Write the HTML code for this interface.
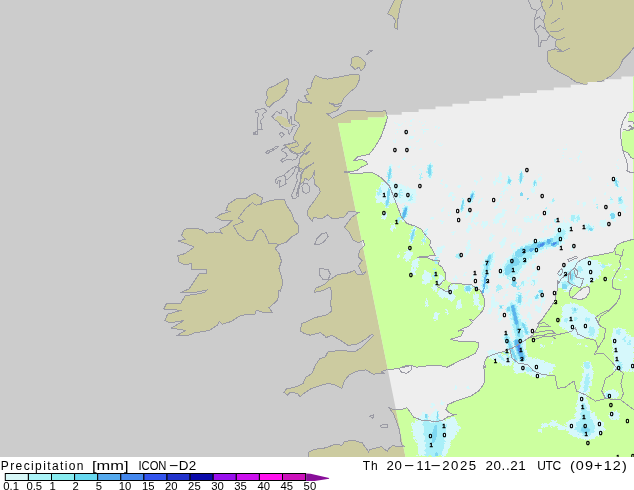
<!DOCTYPE html>
<html><head><meta charset="utf-8"><title>Precipitation ICON-D2</title>
<style>
html,body{margin:0;padding:0;background:#fff;}
body{width:634px;height:490px;position:relative;overflow:hidden;font-family:"Liberation Sans",sans-serif;color:#000;}
.tx{font-family:"Liberation Sans",sans-serif;fill:#000;}
.n{font-family:"Liberation Sans",sans-serif;font-size:6px;font-weight:normal;fill:#000;stroke:#000;stroke-width:0.5px;}
</style></head><body>
<svg width="634" height="457" viewBox="0 0 634 457" style="position:absolute;left:0;top:0;display:block;will-change:transform" shape-rendering="crispEdges">
<defs><clipPath id="dom"><polygon points="338.0,122.9 351.0,122.9 351.0,120.1 367.9,120.1 367.9,117.4 384.79999999999995,117.4 384.8,114.7 401.7,114.7 401.7,112.0 418.59999999999997,112.0 418.59999999999997,109.3 435.49999999999994,109.3 435.5,106.5 452.4,106.5 452.4,103.8 469.29999999999995,103.8 469.29999999999995,101.1 486.19999999999993,101.1 486.2,98.4 503.09999999999997,98.4 503.09999999999997,95.7 520.0,95.7 520.0,92.9 536.9,92.9 536.9,90.2 553.8,90.2 553.8,87.5 570.6999999999999,87.5 570.7,84.8 587.6,84.8 587.5999999999999,82.1 604.4999999999999,82.1 604.5,79.3 621.4,79.3 621.4,76.6 636,76.6 636,458 405.7,458"/></clipPath>
<filter id="rg" x="0" y="0" width="634" height="457" filterUnits="userSpaceOnUse" color-interpolation-filters="sRGB"><feTurbulence type="fractalNoise" baseFrequency="0.45" numOctaves="2" seed="3" result="t"/><feDisplacementMap in="SourceGraphic" in2="t" scale="5" xChannelSelector="R" yChannelSelector="G"/></filter>
<filter id="rg2" x="0" y="0" width="634" height="457" filterUnits="userSpaceOnUse" color-interpolation-filters="sRGB"><feTurbulence type="fractalNoise" baseFrequency="0.45" numOctaves="1" seed="8" result="t"/><feDisplacementMap in="SourceGraphic" in2="t" scale="2" xChannelSelector="R" yChannelSelector="G"/></filter>
</defs>
<rect x="0" y="0" width="634" height="457" fill="#cccccc"/>
<polygon points="315.2,75.3 321.0,77.8 327.3,79.1 341.3,76.6 351.4,74.6 359.0,74.6 359.5,79.1 357.7,84.2 355.2,88.0 350.1,91.8 343.8,98.1 341.3,103.7 334.9,104.4 328.6,102.7 336.2,107.0 341.3,105.2 337.5,110.3 329.9,113.3 327.3,113.8 332.4,118.4 340.0,114.6 348.9,110.0 361.5,110.8 376.7,111.5 385.6,110.8 387.6,117.6 384.3,127.7 380.5,137.8 374.2,148.0 369.1,154.3 357.7,156.8 353.9,160.6 361.5,159.4 366.6,161.9 367.8,164.4 361.5,167.0 356.5,170.8 343.8,172.0 351.4,173.3 360.3,173.3 371.6,172.0 380.5,177.1 389.4,185.9 393.7,196.9 397.5,206.4 401.3,216.8 407.0,223.5 415.5,226.3 421.2,229.2 426.0,235.8 430.7,240.5 429.8,245.3 433.6,251.9 435.5,255.7 426.9,256.1 420.3,256.7 417.4,258.0 426.9,257.6 433.6,260.5 439.3,260.5 438.3,264.3 441.8,266.9 445.1,272.6 445.5,279.7 442.7,281.1 440.3,284.4 437.5,286.3 438.0,287.2 441.8,288.7 444.6,291.0 448.4,291.3 448.4,287.7 450.3,284.4 453.1,283.4 457.8,283.4 464.5,284.4 471.1,284.4 474.4,286.8 476.8,289.1 480.0,289.6 483.9,297.1 484.8,304.7 482.9,310.4 478.2,316.1 473.4,320.8 469.6,318.9 472.5,322.7 468.7,326.5 463.0,328.4 458.2,331.2 463.9,330.3 461.1,336.0 455.4,337.9 450.6,339.2 455.4,340.7 464.9,341.7 473.4,341.1 478.2,342.6 478.2,347.4 475.3,353.1 468.7,356.9 462.0,359.7 454.4,363.5 446.9,367.3 440.2,365.4 430.7,365.4 423.1,366.3 416.5,367.3 410.8,365.4 404.2,367.3 398.5,368.2 392.8,369.2 385.2,370.1 381.4,372.0 384.9,373.2 377.3,373.2 373.5,374.5 365.9,369.9 358.4,370.7 349.5,374.5 344.4,380.8 341.9,388.4 334.3,384.6 328.0,383.4 319.1,385.9 311.5,388.4 303.9,393.5 300.1,396.8 297.6,393.5 290.0,392.2 287.8,395.1 284.1,392.5 286.6,388.7 294.2,387.5 303.0,383.7 305.6,377.3 311.9,373.5 315.7,364.7 320.0,358.4 319.1,359.3 325.4,356.8 328.0,351.7 340.6,350.5 354.6,351.7 360.9,347.9 367.2,342.1 373.5,335.3 371.5,334.5 365.9,339.1 357.1,344.1 348.2,345.4 340.6,340.3 331.8,335.3 325.4,337.8 325.4,336.5 320.4,332.7 310.3,335.2 305.2,333.9 300.6,331.4 301.4,323.8 307.7,321.3 315.3,317.5 326.7,314.9 331.8,311.1 330.5,303.5 331.8,294.7 330.5,287.1 321.6,290.9 314.6,292.2 315.3,288.4 324.2,284.6 328.0,280.8 338.1,274.4 347.0,273.2 354.6,270.6 357.1,274.4 363.4,274.4 365.9,271.9 362.2,273.2 358.4,265.6 362.2,260.5 358.4,256.7 359.6,250.4 364.7,245.3 363.4,240.3 358.4,242.8 353.3,240.3 349.5,232.7 344.4,227.6 345.1,226.3 351.4,217.5 359.0,212.4 348.9,211.1 343.8,217.5 332.4,218.7 327.3,214.9 322.3,218.7 313.4,217.5 312.2,221.3 307.1,214.9 308.4,208.6 315.9,198.5 320.2,191.9 319.0,188.1 314.5,184.3 313.9,178.0 314.5,170.4 312.6,176.7 308.8,180.5 305.0,178.0 303.8,181.8 300.0,184.3 298.7,190.6 296.2,195.7 298.1,188.1 300.0,181.8 301.2,172.9 305.0,169.1 310.1,165.3 313.9,162.8 306.3,167.2 300.0,171.6 298.7,165.3 300.0,157.7 303.8,153.9 310.1,151.4 305.7,154.6 303.8,152.7 307.6,146.3 310.7,142.5 306.3,146.3 302.5,152.0 298.7,153.9 294.9,152.7 289.8,149.5 287.3,147.6 284.8,145.1 291.1,143.8 296.2,141.3 293.0,139.2 293.6,136.7 295.5,132.9 297.4,129.1 300.0,125.3 298.1,122.8 294.9,120.3 294.3,115.2 296.2,111.4 296.8,103.8 298.7,100.0 300.8,101.9 312.2,103.2 307.1,100.6 304.6,95.6 308.4,94.3 306.3,89.2 310.9,88.0 312.2,81.6" fill="#cccba0" stroke="#9a9aa4" stroke-width="1" />
<polygon points="254.2,193.2 262.5,197.7 261.3,204.1 256.2,205.3 263.8,202.8 271.4,200.3 284.1,199.0 286.6,205.3 291.6,212.9 294.2,220.5 298.7,225.6 298.0,233.2 291.6,237.0 286.6,242.0 279.0,244.6 275.2,248.4 279.0,253.4 281.5,261.0 279.0,268.6 281.5,276.2 282.8,283.8 280.3,291.4 279.0,290.0 277.7,300.1 268.9,307.7 272.7,312.8 265.1,312.8 256.2,310.3 254.9,314.1 241.0,315.3 230.9,321.6 222.0,324.2 219.5,321.6 217.0,325.4 209.4,330.5 194.2,333.0 189.1,335.1 177.7,335.1 185.3,330.5 171.4,328.0 184.1,320.4 170.1,322.9 165.1,320.4 167.6,314.1 181.5,310.3 163.8,309.0 166.3,303.9 180.3,303.9 185.3,295.6 194.2,294.4 204.3,292.7 206.8,290.1 192.9,292.7 180.3,292.7 189.1,288.9 194.2,281.3 199.2,273.7 206.8,273.7 206.8,269.9 191.6,269.1 191.6,263.5 185.3,264.8 179.0,262.3 177.7,255.9 185.3,253.4 194.2,247.1 185.3,243.3 177.7,240.8 185.3,239.5 181.5,235.7 184.1,229.4 191.6,228.1 201.8,229.4 206.8,233.2 214.4,231.9 222.0,233.2 219.5,229.4 227.1,225.6 232.2,220.5 222.0,220.5 216.2,217.5 220.8,214.2 229.6,211.6 225.8,210.4 228.4,204.1 235.9,199.0 246.1,198.2" fill="#cccba0" stroke="#9a9aa4" stroke-width="1" />
<polygon points="308.2,456.3 309.0,451.7 315.3,449.2 325.4,447.9 335.6,444.1 341.9,445.4 344.4,441.6 353.3,440.3 362.2,442.9 368.5,451.7 370.0,449.4 373.8,448.5 381.4,446.6 387.1,451.3 389.0,448.5 392.8,445.6 398.5,446.6 405.1,447.0 401.3,444.7 400.4,437.1 399.4,429.5 396.6,421.9 393.7,414.3 389.0,407.7 393.7,409.6 401.3,409.6 407.0,407.7 409.8,411.5 413.6,417.2 421.2,420.0 430.7,421.0 437.4,421.5 443.1,420.0 446.9,417.2 453.5,415.3 457.3,414.0 453.5,414.7 448.7,412.4 445.9,409.6 447.8,404.8 453.5,402.0 461.1,399.2 470.6,396.3 479.1,390.6 483.9,384.0 484.8,374.5 483.5,365.0 485.5,368.2 484.6,361.6 487.4,356.9 495.0,354.0 504.5,351.2 512.1,348.3 519.7,343.6 527.3,338.8 533.0,335.0 538.7,325.5 537.7,323.6 542.5,318.9 546.3,313.2 551.0,306.6 554.8,300.9 557.3,289.5 557.6,280.0 558.6,283.2 561.4,278.5 567.1,274.7 570.9,270.9 574.7,268.1 576.6,263.3 581.4,259.5 589.0,256.7 597.5,255.3 607.0,253.4 613.6,251.9 614.6,249.1 617.4,244.7 622.2,242.4 628.8,240.5 635.4,238.6 636,239 636,458 308,458" fill="#cccba0" stroke="#9a9aa4" stroke-width="1" />
<polygon points="540.3,-1.1 542.5,8.5 545.6,12.7 543.5,21.2 545.6,29.7 551.0,36.1 556.3,39.3 555.2,45.6 561.6,51.0 555.2,48.8 547.8,51.0 547.1,60.5 551.0,66.9 559.4,72.2 567.9,76.4 575.4,81.7 584.9,84.5 593.4,82.8 601.9,81.1 610.4,76.4 618.9,67.9 623.1,59.4 629.5,53.1 635.9,44.6 635.9,-1.1" fill="#cccba0" stroke="#9a9aa4" stroke-width="1" />
<polygon points="286.8,78.5 288.9,80.5 288.1,85.2 285.7,89.2 287.3,90.8 283.4,96.3 278.6,100.2 273.9,102.6 269.2,107.3 266.8,105.7 265.2,102.6 267.6,97.9 266.0,92.3 268.4,88.4 273.9,86.0 281.0,82.1" fill="#cccba0" stroke="#9a9aa4" stroke-width="1" />
<polygon points="351.4,58.1 356.5,56.1 361.5,58.1 365.8,63.2 364.1,68.2 361.0,70.8 359.0,67.0 355.2,69.5 350.9,65.7" fill="#cccba0" stroke="#9a9aa4" stroke-width="1" />
<polygon points="387.6,13.9 391.4,6.3 395.2,-1.3 402.8,-1.3 400.3,6.3 399.0,12.7 397.7,20.3 397.2,29.1 394.7,27.8 395.2,20.3 392.7,16.5" fill="#cccba0" stroke="#9a9aa4" stroke-width="1" />
<polygon points="274.7,119.0 277.2,115.8 282.3,116.5 287.3,119.0 288.6,123.4 291.7,124.1 291.1,117.7 292.4,117.7 292.4,125.3 289.2,127.2 286.1,127.2 282.3,125.3 278.5,122.2" fill="#cccba0" stroke="none" stroke-width="1" />
<polygon points="272.1,116.5 276.6,111.4 281.0,113.9 281.6,110.1 284.8,109.5 287.3,112.7 287.9,119.0 289.2,122.8 290.5,116.5 291.7,117.1 291.7,124.1 296.2,125.3 293.0,127.2 291.1,131.6 289.2,134.2 287.9,129.7 283.5,127.8 281.0,125.9 278.5,122.2 274.7,119.6" fill="none" stroke="#9a9aa4" stroke-width="1" />
<polygon points="255.8,110.5 263.7,108.1 266.8,111.3 262.1,114.4 263.7,117.6 260.5,120.7 262.1,129.4 257.4,129.4 257.4,119.9 258.9,113.6 255.8,112.1" fill="none" stroke="#9a9aa4" stroke-width="1" />
<polygon points="253.4,134.1 257.4,131.0 257.4,134.9" fill="none" stroke="#9a9aa4" stroke-width="1" />
<polygon points="283.5,145.1 289.2,143.8 293.6,142.5 296.8,141.9 298.7,145.7 294.9,147.0 291.1,147.6 289.2,150.1 292.4,152.7 296.2,153.9 298.1,155.8 296.2,159.0 292.4,160.3 289.2,159.0 285.4,160.3 282.3,162.2 280.7,160.9 282.3,159.0 285.4,157.7 287.3,155.2 285.4,152.7 282.3,151.4 281.6,149.5 284.2,148.2 286.1,147.0" fill="none" stroke="#9a9aa4" stroke-width="1" />
<polygon points="284.8,174.2 289.2,170.4 293.6,167.2 295.9,166.6 294.3,171.6 291.1,176.1 287.9,179.2 285.4,179.9" fill="none" stroke="#9a9aa4" stroke-width="1" />
<polygon points="275.3,180.5 277.8,177.3 281.6,176.1 284.8,174.8 285.4,179.9 286.1,183.7 282.9,185.6 279.7,187.1 279.1,183.7 280.4,180.5 277.8,181.1 277.2,183.7 275.7,183.0" fill="none" stroke="#9a9aa4" stroke-width="1" />
<polygon points="295.9,167.2 298.1,165.3 299.3,167.2 298.1,171.6 296.2,176.7 297.4,180.5 295.5,185.6 293.6,190.6 291.7,195.1 292.4,198.2 295.5,198.5 298.1,196.3 298.7,190.6 300.0,184.3 301.2,178.0 302.5,172.3 304.4,169.7" fill="none" stroke="#9a9aa4" stroke-width="1" />
<polygon points="301.9,186.2 303.8,183.7 306.9,183.3 309.1,186.2 309.8,190.6 308.2,192.9 305.0,193.2 302.8,191.3" fill="none" stroke="#9a9aa4" stroke-width="1" />
<polygon points="265.8,152.7 267.7,150.8 270.2,150.1 272.8,148.9 275.3,147.0 278.5,146.1 277.8,147.6 274.7,149.1 272.1,151.1 269.6,152.0 267.1,154.2" fill="none" stroke="#9a9aa4" stroke-width="1" />
<polygon points="279.1,134.2 281.6,132.3 284.2,134.8 282.0,137.3" fill="none" stroke="#9a9aa4" stroke-width="1" />
<polygon points="253.9,132.7 257.7,130.6 257.2,134.7" fill="none" stroke="#9a9aa4" stroke-width="1" />
<polygon points="314.6,244.8 316.6,239.0 321.6,233.9 326.7,232.7 328.0,236.5 324.2,241.5 319.1,244.8" fill="none" stroke="#9a9aa4" stroke-width="1" />
<polygon points="319.1,268.6 328.0,269.4 330.5,274.4 328.0,279.5 322.9,279.5 319.1,274.4" fill="none" stroke="#9a9aa4" stroke-width="1" />
<polygon points="369.7,416.3 373.5,415.0 373.0,418.3" fill="none" stroke="#9a9aa4" stroke-width="1" />
<polygon points="380.6,425.1 387.5,424.6 387.0,427.7 381.1,427.2" fill="none" stroke="#9a9aa4" stroke-width="1" />
<polygon points="366.6,55.1 369.1,51.0 372.9,50.5 370.4,51.8" fill="none" stroke="#9a9aa4" stroke-width="1" />
<polyline points="256.2,205.3 252.4,202.8 246.1,207.8 238.5,218.0 243.5,221.8 233.4,225.6 238.5,234.4 247.3,240.8 252.4,240.8 257.5,230.6 261.3,229.4 265.1,234.4 268.9,243.3 275.2,243.3 279.0,244.6" fill="none" stroke="#9a9aa4" stroke-width="1"/>
<polyline points="527.6,-1.1 531.8,8.5 537.2,10.6 534.0,20.2 535.0,29.7 538.2,35.0 538.2,46.7 540.3,46.7 541.4,40.3 546.7,40.3 549.9,35.0" fill="none" stroke="#9a9aa4" stroke-width="1"/>
<polyline points="537.2,10.6 541.4,6.4 542.5,1.1" fill="none" stroke="#9a9aa4" stroke-width="1"/>
<polyline points="534.0,20.2 539.3,17.0 543.5,21.2" fill="none" stroke="#9a9aa4" stroke-width="1"/>
<polyline points="535.0,29.7 540.3,25.5 545.6,29.7" fill="none" stroke="#9a9aa4" stroke-width="1"/>
<polyline points="551.0,23.4 555.2,21.2 559.4,18.0" fill="none" stroke="#9a9aa4" stroke-width="1"/>
<polyline points="549.9,31.8 557.3,31.8 563.7,28.7" fill="none" stroke="#9a9aa4" stroke-width="1"/>
<polyline points="556.3,39.3 560.5,39.3 564.8,37.2" fill="none" stroke="#9a9aa4" stroke-width="1"/>
<polyline points="557.3,52.0 563.7,51.0 570.1,47.8" fill="none" stroke="#9a9aa4" stroke-width="1"/>
<polyline points="548.8,8.5 552.0,4.2 553.1,0.0" fill="none" stroke="#9a9aa4" stroke-width="1"/>
<polyline points="561.6,2.1 562.6,9.6" fill="none" stroke="#9a9aa4" stroke-width="1"/>
<g clip-path="url(#dom)">
<rect x="0" y="0" width="634" height="457" fill="#eeeeee"/>
<polygon points="315.2,75.3 321.0,77.8 327.3,79.1 341.3,76.6 351.4,74.6 359.0,74.6 359.5,79.1 357.7,84.2 355.2,88.0 350.1,91.8 343.8,98.1 341.3,103.7 334.9,104.4 328.6,102.7 336.2,107.0 341.3,105.2 337.5,110.3 329.9,113.3 327.3,113.8 332.4,118.4 340.0,114.6 348.9,110.0 361.5,110.8 376.7,111.5 385.6,110.8 387.6,117.6 384.3,127.7 380.5,137.8 374.2,148.0 369.1,154.3 357.7,156.8 353.9,160.6 361.5,159.4 366.6,161.9 367.8,164.4 361.5,167.0 356.5,170.8 343.8,172.0 351.4,173.3 360.3,173.3 371.6,172.0 380.5,177.1 389.4,185.9 393.7,196.9 397.5,206.4 401.3,216.8 407.0,223.5 415.5,226.3 421.2,229.2 426.0,235.8 430.7,240.5 429.8,245.3 433.6,251.9 435.5,255.7 426.9,256.1 420.3,256.7 417.4,258.0 426.9,257.6 433.6,260.5 439.3,260.5 438.3,264.3 441.8,266.9 445.1,272.6 445.5,279.7 442.7,281.1 440.3,284.4 437.5,286.3 438.0,287.2 441.8,288.7 444.6,291.0 448.4,291.3 448.4,287.7 450.3,284.4 453.1,283.4 457.8,283.4 464.5,284.4 471.1,284.4 474.4,286.8 476.8,289.1 480.0,289.6 483.9,297.1 484.8,304.7 482.9,310.4 478.2,316.1 473.4,320.8 469.6,318.9 472.5,322.7 468.7,326.5 463.0,328.4 458.2,331.2 463.9,330.3 461.1,336.0 455.4,337.9 450.6,339.2 455.4,340.7 464.9,341.7 473.4,341.1 478.2,342.6 478.2,347.4 475.3,353.1 468.7,356.9 462.0,359.7 454.4,363.5 446.9,367.3 440.2,365.4 430.7,365.4 423.1,366.3 416.5,367.3 410.8,365.4 404.2,367.3 398.5,368.2 392.8,369.2 385.2,370.1 381.4,372.0 384.9,373.2 377.3,373.2 373.5,374.5 365.9,369.9 358.4,370.7 349.5,374.5 344.4,380.8 341.9,388.4 334.3,384.6 328.0,383.4 319.1,385.9 311.5,388.4 303.9,393.5 300.1,396.8 297.6,393.5 290.0,392.2 287.8,395.1 284.1,392.5 286.6,388.7 294.2,387.5 303.0,383.7 305.6,377.3 311.9,373.5 315.7,364.7 320.0,358.4 319.1,359.3 325.4,356.8 328.0,351.7 340.6,350.5 354.6,351.7 360.9,347.9 367.2,342.1 373.5,335.3 371.5,334.5 365.9,339.1 357.1,344.1 348.2,345.4 340.6,340.3 331.8,335.3 325.4,337.8 325.4,336.5 320.4,332.7 310.3,335.2 305.2,333.9 300.6,331.4 301.4,323.8 307.7,321.3 315.3,317.5 326.7,314.9 331.8,311.1 330.5,303.5 331.8,294.7 330.5,287.1 321.6,290.9 314.6,292.2 315.3,288.4 324.2,284.6 328.0,280.8 338.1,274.4 347.0,273.2 354.6,270.6 357.1,274.4 363.4,274.4 365.9,271.9 362.2,273.2 358.4,265.6 362.2,260.5 358.4,256.7 359.6,250.4 364.7,245.3 363.4,240.3 358.4,242.8 353.3,240.3 349.5,232.7 344.4,227.6 345.1,226.3 351.4,217.5 359.0,212.4 348.9,211.1 343.8,217.5 332.4,218.7 327.3,214.9 322.3,218.7 313.4,217.5 312.2,221.3 307.1,214.9 308.4,208.6 315.9,198.5 320.2,191.9 319.0,188.1 314.5,184.3 313.9,178.0 314.5,170.4 312.6,176.7 308.8,180.5 305.0,178.0 303.8,181.8 300.0,184.3 298.7,190.6 296.2,195.7 298.1,188.1 300.0,181.8 301.2,172.9 305.0,169.1 310.1,165.3 313.9,162.8 306.3,167.2 300.0,171.6 298.7,165.3 300.0,157.7 303.8,153.9 310.1,151.4 305.7,154.6 303.8,152.7 307.6,146.3 310.7,142.5 306.3,146.3 302.5,152.0 298.7,153.9 294.9,152.7 289.8,149.5 287.3,147.6 284.8,145.1 291.1,143.8 296.2,141.3 293.0,139.2 293.6,136.7 295.5,132.9 297.4,129.1 300.0,125.3 298.1,122.8 294.9,120.3 294.3,115.2 296.2,111.4 296.8,103.8 298.7,100.0 300.8,101.9 312.2,103.2 307.1,100.6 304.6,95.6 308.4,94.3 306.3,89.2 310.9,88.0 312.2,81.6" fill="#ccff9f" stroke="none" stroke-width="1" />
<polygon points="254.2,193.2 262.5,197.7 261.3,204.1 256.2,205.3 263.8,202.8 271.4,200.3 284.1,199.0 286.6,205.3 291.6,212.9 294.2,220.5 298.7,225.6 298.0,233.2 291.6,237.0 286.6,242.0 279.0,244.6 275.2,248.4 279.0,253.4 281.5,261.0 279.0,268.6 281.5,276.2 282.8,283.8 280.3,291.4 279.0,290.0 277.7,300.1 268.9,307.7 272.7,312.8 265.1,312.8 256.2,310.3 254.9,314.1 241.0,315.3 230.9,321.6 222.0,324.2 219.5,321.6 217.0,325.4 209.4,330.5 194.2,333.0 189.1,335.1 177.7,335.1 185.3,330.5 171.4,328.0 184.1,320.4 170.1,322.9 165.1,320.4 167.6,314.1 181.5,310.3 163.8,309.0 166.3,303.9 180.3,303.9 185.3,295.6 194.2,294.4 204.3,292.7 206.8,290.1 192.9,292.7 180.3,292.7 189.1,288.9 194.2,281.3 199.2,273.7 206.8,273.7 206.8,269.9 191.6,269.1 191.6,263.5 185.3,264.8 179.0,262.3 177.7,255.9 185.3,253.4 194.2,247.1 185.3,243.3 177.7,240.8 185.3,239.5 181.5,235.7 184.1,229.4 191.6,228.1 201.8,229.4 206.8,233.2 214.4,231.9 222.0,233.2 219.5,229.4 227.1,225.6 232.2,220.5 222.0,220.5 216.2,217.5 220.8,214.2 229.6,211.6 225.8,210.4 228.4,204.1 235.9,199.0 246.1,198.2" fill="#ccff9f" stroke="none" stroke-width="1" />
<polygon points="308.2,456.3 309.0,451.7 315.3,449.2 325.4,447.9 335.6,444.1 341.9,445.4 344.4,441.6 353.3,440.3 362.2,442.9 368.5,451.7 370.0,449.4 373.8,448.5 381.4,446.6 387.1,451.3 389.0,448.5 392.8,445.6 398.5,446.6 405.1,447.0 401.3,444.7 400.4,437.1 399.4,429.5 396.6,421.9 393.7,414.3 389.0,407.7 393.7,409.6 401.3,409.6 407.0,407.7 409.8,411.5 413.6,417.2 421.2,420.0 430.7,421.0 437.4,421.5 443.1,420.0 446.9,417.2 453.5,415.3 457.3,414.0 453.5,414.7 448.7,412.4 445.9,409.6 447.8,404.8 453.5,402.0 461.1,399.2 470.6,396.3 479.1,390.6 483.9,384.0 484.8,374.5 483.5,365.0 485.5,368.2 484.6,361.6 487.4,356.9 495.0,354.0 504.5,351.2 512.1,348.3 519.7,343.6 527.3,338.8 533.0,335.0 538.7,325.5 537.7,323.6 542.5,318.9 546.3,313.2 551.0,306.6 554.8,300.9 557.3,289.5 557.6,280.0 558.6,283.2 561.4,278.5 567.1,274.7 570.9,270.9 574.7,268.1 576.6,263.3 581.4,259.5 589.0,256.7 597.5,255.3 607.0,253.4 613.6,251.9 614.6,249.1 617.4,244.7 622.2,242.4 628.8,240.5 635.4,238.6 636,239 636,458 308,458" fill="#ccff9f" stroke="none" stroke-width="1" />
<polygon points="286.8,78.5 288.9,80.5 288.1,85.2 285.7,89.2 287.3,90.8 283.4,96.3 278.6,100.2 273.9,102.6 269.2,107.3 266.8,105.7 265.2,102.6 267.6,97.9 266.0,92.3 268.4,88.4 273.9,86.0 281.0,82.1" fill="#ccff9f" stroke="none" stroke-width="1" />
<polygon points="351.4,58.1 356.5,56.1 361.5,58.1 365.8,63.2 364.1,68.2 361.0,70.8 359.0,67.0 355.2,69.5 350.9,65.7" fill="#ccff9f" stroke="none" stroke-width="1" />
<polygon points="387.6,13.9 391.4,6.3 395.2,-1.3 402.8,-1.3 400.3,6.3 399.0,12.7 397.7,20.3 397.2,29.1 394.7,27.8 395.2,20.3 392.7,16.5" fill="#ccff9f" stroke="none" stroke-width="1" />
<rect x="633" y="70" width="1" height="390" fill="#ccff9f"/>
<polygon points="445.5,279.7 442.7,281.1 440.3,284.4 437.5,286.3 438.0,287.2 441.8,288.7 444.6,291.0 448.4,291.3 448.4,287.7 450.3,284.4 453.1,283.4 448.4,281.6" fill="#ccff9f" stroke="none" stroke-width="1" />
<polygon points="637.3,111.9 629.4,113.4 627.9,120.4 632.6,122.3 635.4,127.1 627.9,129.4 621.8,131.8 621.4,141.3 623.3,150.8 627.9,152.7 630.7,157.4 637.3,159.3" fill="#ccff9f" stroke="none" stroke-width="1" />
<polygon points="399.0,368.4 405.3,365.8 411.6,365.8 411.6,369.6 406.6,373.4 401.5,372.2" fill="#eeeeee" stroke="none" stroke-width="1" />
<polygon points="572.4,297.2 578.7,291.5 583.2,287.7 588.2,286.5 590.1,289.0 588.9,293.4 585.7,297.8 580.6,299.7 573.7,298.5" fill="#eeeeee" stroke="none" stroke-width="1" />
<polygon points="567.7,259.5 576.5,256.2 577.3,257.7 568.9,261.5" fill="#eeeeee" stroke="none" stroke-width="1" />
<polygon points="557.5,273.4 561.3,268.4 563.1,270.9 560.1,275.9" fill="#eeeeee" stroke="none" stroke-width="1" />
<g filter="url(#rg)">
<polygon points="498.0,279.7 500.9,266.4 508.5,256.9 518.0,246.5 527.4,242.7 536.9,238.0 546.4,238.0 554.0,234.2 557.8,224.7 563.5,221.8 571.1,222.8 572.0,230.4 567.3,238.0 561.6,245.5 554.0,248.4 544.5,250.3 536.9,255.0 529.3,262.6 521.7,272.1 516.1,281.6 511.3,288.2 509.4,281.6 504.7,275.9" fill="#d6f8fb"/>
<polygon points="480.0,279.7 481.9,262.6 487.6,254.1 495.2,251.2 494.2,260.7 490.4,275.9 486.6,291.1 480.0,293.0" fill="#d6f8fb"/>
<ellipse cx="497.1" cy="219.0" rx="2.8" ry="5.7" transform="rotate(25 497.1 219.0)" fill="#d6f8fb"/>
<ellipse cx="502.8" cy="213.3" rx="1.9" ry="4.7" transform="rotate(25 502.8 213.3)" fill="#d6f8fb"/>
<ellipse cx="515.1" cy="228.5" rx="1.9" ry="3.8" transform="rotate(25 515.1 228.5)" fill="#d6f8fb"/>
<ellipse cx="502.8" cy="242.7" rx="2.4" ry="5.7" transform="rotate(25 502.8 242.7)" fill="#d6f8fb"/>
<ellipse cx="491.4" cy="238.0" rx="1.9" ry="4.7" transform="rotate(25 491.4 238.0)" fill="#d6f8fb"/>
<ellipse cx="531.2" cy="219.9" rx="1.5" ry="2.8" transform="rotate(25 531.2 219.9)" fill="#d6f8fb"/>
<ellipse cx="540.7" cy="218.4" rx="1.7" ry="2.8" transform="rotate(25 540.7 218.4)" fill="#d6f8fb"/>
<ellipse cx="513.2" cy="245.5" rx="1.7" ry="3.8" transform="rotate(25 513.2 245.5)" fill="#d6f8fb"/>
<ellipse cx="485.7" cy="224.7" rx="1.9" ry="3.8" transform="rotate(25 485.7 224.7)" fill="#d6f8fb"/>
<ellipse cx="523.6" cy="283.5" rx="2.8" ry="3.8" transform="rotate(20 523.6 283.5)" fill="#d6f8fb"/>
<ellipse cx="534.1" cy="281.6" rx="3.8" ry="2.8" transform="rotate(0 534.1 281.6)" fill="#d6f8fb"/>
<ellipse cx="410.0" cy="121.4" rx="1.6" ry="0.5" transform="rotate(-15 410.0 121.4)" fill="#d6f8fb"/>
<ellipse cx="421.2" cy="129.6" rx="0.8" ry="0.7" transform="rotate(-15 421.2 129.6)" fill="#d6f8fb"/>
<ellipse cx="394.8" cy="132.1" rx="0.9" ry="0.5" transform="rotate(-15 394.8 132.1)" fill="#d6f8fb"/>
<ellipse cx="415.3" cy="147.1" rx="0.9" ry="0.6" transform="rotate(-15 415.3 147.1)" fill="#d6f8fb"/>
<ellipse cx="423.4" cy="130.7" rx="2.1" ry="0.5" transform="rotate(-15 423.4 130.7)" fill="#d6f8fb"/>
<ellipse cx="438.4" cy="126.7" rx="1.0" ry="0.5" transform="rotate(-15 438.4 126.7)" fill="#d6f8fb"/>
<ellipse cx="409.2" cy="146.7" rx="1.0" ry="0.8" transform="rotate(-15 409.2 146.7)" fill="#d6f8fb"/>
<ellipse cx="426.7" cy="129.8" rx="1.5" ry="0.5" transform="rotate(-15 426.7 129.8)" fill="#d6f8fb"/>
<ellipse cx="395.9" cy="123.5" rx="1.7" ry="0.7" transform="rotate(-15 395.9 123.5)" fill="#d6f8fb"/>
<ellipse cx="409.5" cy="137.9" rx="1.4" ry="0.6" transform="rotate(-15 409.5 137.9)" fill="#d6f8fb"/>
<ellipse cx="435.0" cy="142.2" rx="1.1" ry="0.7" transform="rotate(-15 435.0 142.2)" fill="#d6f8fb"/>
<ellipse cx="420.7" cy="148.9" rx="1.7" ry="0.6" transform="rotate(-15 420.7 148.9)" fill="#d6f8fb"/>
<ellipse cx="415.0" cy="144.4" rx="1.0" ry="0.7" transform="rotate(-15 415.0 144.4)" fill="#d6f8fb"/>
<ellipse cx="394.9" cy="141.1" rx="1.8" ry="0.7" transform="rotate(-15 394.9 141.1)" fill="#d6f8fb"/>
<ellipse cx="439.3" cy="127.6" rx="1.7" ry="0.8" transform="rotate(-15 439.3 127.6)" fill="#d6f8fb"/>
<ellipse cx="423.6" cy="133.0" rx="1.9" ry="0.9" transform="rotate(-15 423.6 133.0)" fill="#d6f8fb"/>
<ellipse cx="418.0" cy="140.9" rx="0.8" ry="0.8" transform="rotate(-15 418.0 140.9)" fill="#d6f8fb"/>
<ellipse cx="436.4" cy="126.5" rx="1.3" ry="0.8" transform="rotate(-15 436.4 126.5)" fill="#d6f8fb"/>
<ellipse cx="394.0" cy="133.2" rx="1.0" ry="0.5" transform="rotate(-15 394.0 133.2)" fill="#d6f8fb"/>
<ellipse cx="399.6" cy="125.1" rx="1.3" ry="0.9" transform="rotate(-15 399.6 125.1)" fill="#d6f8fb"/>
<ellipse cx="397.1" cy="132.7" rx="1.5" ry="0.9" transform="rotate(-15 397.1 132.7)" fill="#d6f8fb"/>
<ellipse cx="407.6" cy="131.5" rx="1.2" ry="0.9" transform="rotate(-15 407.6 131.5)" fill="#d6f8fb"/>
<ellipse cx="402.1" cy="124.5" rx="1.1" ry="0.7" transform="rotate(-15 402.1 124.5)" fill="#d6f8fb"/>
<ellipse cx="424.1" cy="125.7" rx="0.8" ry="0.7" transform="rotate(-15 424.1 125.7)" fill="#d6f8fb"/>
<ellipse cx="412.4" cy="137.2" rx="2.0" ry="0.8" transform="rotate(-15 412.4 137.2)" fill="#d6f8fb"/>
<ellipse cx="420.2" cy="139.1" rx="1.7" ry="0.5" transform="rotate(-15 420.2 139.1)" fill="#d6f8fb"/>
<ellipse cx="440.6" cy="145.3" rx="1.9" ry="0.9" transform="rotate(-15 440.6 145.3)" fill="#d6f8fb"/>
<ellipse cx="413.6" cy="130.8" rx="0.9" ry="0.8" transform="rotate(-15 413.6 130.8)" fill="#d6f8fb"/>
<ellipse cx="403.9" cy="121.9" rx="1.2" ry="0.5" transform="rotate(-15 403.9 121.9)" fill="#d6f8fb"/>
<ellipse cx="398.2" cy="129.5" rx="0.8" ry="0.9" transform="rotate(-15 398.2 129.5)" fill="#d6f8fb"/>
<ellipse cx="425.4" cy="121.3" rx="1.1" ry="0.6" transform="rotate(-15 425.4 121.3)" fill="#d6f8fb"/>
<ellipse cx="412.1" cy="120.4" rx="1.9" ry="0.9" transform="rotate(-15 412.1 120.4)" fill="#d6f8fb"/>
<ellipse cx="417.5" cy="134.1" rx="0.9" ry="0.5" transform="rotate(-15 417.5 134.1)" fill="#d6f8fb"/>
<ellipse cx="411.0" cy="125.7" rx="1.9" ry="0.6" transform="rotate(-15 411.0 125.7)" fill="#d6f8fb"/>
<ellipse cx="420.8" cy="121.3" rx="1.5" ry="0.5" transform="rotate(-15 420.8 121.3)" fill="#d6f8fb"/>
<ellipse cx="429.8" cy="170.3" rx="3.2" ry="8.8" transform="rotate(3 429.8 170.3)" fill="#d6f8fb"/>
<ellipse cx="389.5" cy="174.5" rx="2.4" ry="10.0" transform="rotate(8 389.5 174.5)" fill="#d6f8fb"/>
<ellipse cx="420.9" cy="174.5" rx="1.3" ry="6.6" transform="rotate(5 420.9 174.5)" fill="#d6f8fb"/>
<polygon points="375.7,193.5 381.4,184.0 387.1,180.2 394.7,182.1 404.2,185.9 415.5,189.7 416.5,203.0 375.7,203.0" fill="#d6f8fb"/>
<ellipse cx="471.5" cy="197.3" rx="2.8" ry="7.8" transform="rotate(20 471.5 197.3)" fill="#d6f8fb"/>
<ellipse cx="398.5" cy="166.9" rx="1.3" ry="2.1" transform="rotate(10 398.5 166.9)" fill="#d6f8fb"/>
<ellipse cx="404.2" cy="159.3" rx="1.3" ry="2.1" transform="rotate(10 404.2 159.3)" fill="#d6f8fb"/>
<ellipse cx="413.6" cy="166.9" rx="1.3" ry="2.1" transform="rotate(10 413.6 166.9)" fill="#d6f8fb"/>
<ellipse cx="445.9" cy="185.9" rx="1.3" ry="2.1" transform="rotate(10 445.9 185.9)" fill="#d6f8fb"/>
<ellipse cx="451.6" cy="193.5" rx="1.3" ry="2.1" transform="rotate(10 451.6 193.5)" fill="#d6f8fb"/>
<ellipse cx="442.1" cy="182.1" rx="1.3" ry="2.1" transform="rotate(10 442.1 182.1)" fill="#d6f8fb"/>
<ellipse cx="459.2" cy="185.9" rx="1.3" ry="2.1" transform="rotate(10 459.2 185.9)" fill="#d6f8fb"/>
<ellipse cx="476.3" cy="182.1" rx="1.3" ry="2.1" transform="rotate(10 476.3 182.1)" fill="#d6f8fb"/>
<ellipse cx="482.0" cy="178.3" rx="1.3" ry="2.1" transform="rotate(10 482.0 178.3)" fill="#d6f8fb"/>
<ellipse cx="404.7" cy="213.0" rx="3.5" ry="9.1" transform="rotate(15 404.7 213.0)" fill="#d6f8fb"/>
<ellipse cx="387.5" cy="201.6" rx="2.8" ry="6.4" transform="rotate(10 387.5 201.6)" fill="#d6f8fb"/>
<ellipse cx="412.7" cy="234.8" rx="2.4" ry="9.3" transform="rotate(15 412.7 234.8)" fill="#d6f8fb"/>
<ellipse cx="425.0" cy="236.7" rx="1.8" ry="8.9" transform="rotate(15 425.0 236.7)" fill="#d6f8fb"/>
<ellipse cx="408.0" cy="255.7" rx="3.8" ry="5.7" transform="rotate(15 408.0 255.7)" fill="#d6f8fb"/>
<ellipse cx="415.5" cy="263.3" rx="3.3" ry="5.7" transform="rotate(15 415.5 263.3)" fill="#d6f8fb"/>
<ellipse cx="398.5" cy="255.7" rx="1.7" ry="2.8" transform="rotate(15 398.5 255.7)" fill="#d6f8fb"/>
<ellipse cx="392.8" cy="227.3" rx="2.4" ry="3.8" transform="rotate(15 392.8 227.3)" fill="#d6f8fb"/>
<ellipse cx="384.2" cy="215.9" rx="2.4" ry="3.8" transform="rotate(15 384.2 215.9)" fill="#d6f8fb"/>
<ellipse cx="426.9" cy="276.6" rx="4.7" ry="5.7" transform="rotate(15 426.9 276.6)" fill="#d6f8fb"/>
<ellipse cx="413.6" cy="270.9" rx="2.8" ry="3.8" transform="rotate(15 413.6 270.9)" fill="#d6f8fb"/>
<ellipse cx="438.3" cy="251.9" rx="2.4" ry="4.7" transform="rotate(15 438.3 251.9)" fill="#d6f8fb"/>
<ellipse cx="442.1" cy="248.1" rx="1.7" ry="3.8" transform="rotate(15 442.1 248.1)" fill="#d6f8fb"/>
<ellipse cx="440.2" cy="280.4" rx="2.8" ry="5.7" transform="rotate(5 440.2 280.4)" fill="#d6f8fb"/>
<ellipse cx="462.4" cy="205.4" rx="2.0" ry="7.8" transform="rotate(12 462.4 205.4)" fill="#d6f8fb"/>
<ellipse cx="470.6" cy="198.8" rx="2.0" ry="5.0" transform="rotate(12 470.6 198.8)" fill="#d6f8fb"/>
<ellipse cx="449.7" cy="214.0" rx="1.3" ry="2.5" transform="rotate(20 449.7 214.0)" fill="#d6f8fb"/>
<ellipse cx="442.1" cy="221.6" rx="1.3" ry="2.5" transform="rotate(20 442.1 221.6)" fill="#d6f8fb"/>
<ellipse cx="453.5" cy="233.0" rx="1.3" ry="2.5" transform="rotate(20 453.5 233.0)" fill="#d6f8fb"/>
<ellipse cx="476.3" cy="223.5" rx="1.3" ry="2.5" transform="rotate(20 476.3 223.5)" fill="#d6f8fb"/>
<ellipse cx="468.7" cy="242.4" rx="1.3" ry="2.5" transform="rotate(20 468.7 242.4)" fill="#d6f8fb"/>
<ellipse cx="480.1" cy="251.9" rx="1.3" ry="2.5" transform="rotate(20 480.1 251.9)" fill="#d6f8fb"/>
<ellipse cx="455.4" cy="278.5" rx="1.3" ry="2.5" transform="rotate(20 455.4 278.5)" fill="#d6f8fb"/>
<ellipse cx="464.9" cy="274.7" rx="1.3" ry="2.5" transform="rotate(20 464.9 274.7)" fill="#d6f8fb"/>
<ellipse cx="432.6" cy="217.8" rx="1.3" ry="2.5" transform="rotate(20 432.6 217.8)" fill="#d6f8fb"/>
<ellipse cx="467.7" cy="288.5" rx="3.8" ry="4.3" transform="rotate(0 467.7 288.5)" fill="#d6f8fb"/>
<ellipse cx="442.1" cy="293.3" rx="3.8" ry="4.7" transform="rotate(5 442.1 293.3)" fill="#d6f8fb"/>
<ellipse cx="451.6" cy="297.1" rx="3.8" ry="3.8" transform="rotate(5 451.6 297.1)" fill="#d6f8fb"/>
<ellipse cx="436.4" cy="316.1" rx="2.8" ry="3.8" transform="rotate(5 436.4 316.1)" fill="#d6f8fb"/>
<ellipse cx="426.9" cy="302.8" rx="1.5" ry="4.7" transform="rotate(5 426.9 302.8)" fill="#d6f8fb"/>
<ellipse cx="446.9" cy="311.3" rx="1.5" ry="2.8" transform="rotate(5 446.9 311.3)" fill="#d6f8fb"/>
<ellipse cx="459.2" cy="304.7" rx="1.9" ry="3.8" transform="rotate(5 459.2 304.7)" fill="#d6f8fb"/>
<ellipse cx="476.3" cy="300.9" rx="2.8" ry="4.7" transform="rotate(5 476.3 300.9)" fill="#d6f8fb"/>
<ellipse cx="434.5" cy="287.6" rx="2.4" ry="3.8" transform="rotate(5 434.5 287.6)" fill="#d6f8fb"/>
<ellipse cx="425.0" cy="282.8" rx="3.8" ry="1.9" transform="rotate(5 425.0 282.8)" fill="#d6f8fb"/>
<ellipse cx="453.5" cy="287.6" rx="4.7" ry="2.8" transform="rotate(5 453.5 287.6)" fill="#d6f8fb"/>
<ellipse cx="480.1" cy="306.6" rx="1.9" ry="2.8" transform="rotate(5 480.1 306.6)" fill="#d6f8fb"/>
<polygon points="410.8,423.8 415.5,421.9 425.0,410.5 426.9,420.0 436.4,408.6 440.2,420.0 445.9,420.0 453.5,416.2 457.3,421.9 459.2,429.5 451.6,440.9 445.9,456.1 417.4,456.1 418.4,444.7 413.6,437.1" fill="#d6f8fb"/>
<ellipse cx="432.6" cy="404.8" rx="1.9" ry="1.9" transform="rotate(0 432.6 404.8)" fill="#d6f8fb"/>
<ellipse cx="442.1" cy="403.0" rx="1.9" ry="1.9" transform="rotate(0 442.1 403.0)" fill="#d6f8fb"/>
<ellipse cx="455.4" cy="387.8" rx="1.9" ry="1.9" transform="rotate(0 455.4 387.8)" fill="#d6f8fb"/>
<ellipse cx="468.7" cy="387.8" rx="1.9" ry="1.9" transform="rotate(0 468.7 387.8)" fill="#d6f8fb"/>
<ellipse cx="459.2" cy="427.6" rx="1.9" ry="1.9" transform="rotate(0 459.2 427.6)" fill="#d6f8fb"/>
<ellipse cx="508.8" cy="180.6" rx="3.2" ry="5.7" transform="rotate(0 508.8 180.6)" fill="#d6f8fb"/>
<ellipse cx="521.2" cy="177.4" rx="2.4" ry="7.1" transform="rotate(5 521.2 177.4)" fill="#d6f8fb"/>
<ellipse cx="534.6" cy="183.1" rx="2.0" ry="3.1" transform="rotate(10 534.6 183.1)" fill="#d6f8fb"/>
<ellipse cx="499.9" cy="178.3" rx="1.9" ry="5.7" transform="rotate(5 499.9 178.3)" fill="#d6f8fb"/>
<ellipse cx="495.2" cy="182.1" rx="1.7" ry="3.8" transform="rotate(5 495.2 182.1)" fill="#d6f8fb"/>
<ellipse cx="504.7" cy="189.7" rx="1.9" ry="4.7" transform="rotate(20 504.7 189.7)" fill="#d6f8fb"/>
<ellipse cx="533.1" cy="189.7" rx="1.9" ry="3.8" transform="rotate(0 533.1 189.7)" fill="#d6f8fb"/>
<ellipse cx="521.0" cy="177.4" rx="2.4" ry="7.8" transform="rotate(5 521.0 177.4)" fill="#d6f8fb"/>
<ellipse cx="534.5" cy="183.6" rx="2.0" ry="3.7" transform="rotate(10 534.5 183.6)" fill="#d6f8fb"/>
<ellipse cx="533.0" cy="190.6" rx="1.5" ry="2.8" transform="rotate(0 533.0 190.6)" fill="#d6f8fb"/>
<ellipse cx="540.6" cy="178.3" rx="1.5" ry="3.8" transform="rotate(0 540.6 178.3)" fill="#d6f8fb"/>
<ellipse cx="616.5" cy="183.1" rx="2.0" ry="6.4" transform="rotate(-12 616.5 183.1)" fill="#d6f8fb"/>
<ellipse cx="620.3" cy="199.2" rx="2.8" ry="3.1" transform="rotate(0 620.3 199.2)" fill="#d6f8fb"/>
<ellipse cx="578.9" cy="157.0" rx="0.9" ry="0.7" transform="rotate(-20 578.9 157.0)" fill="#d6f8fb"/>
<ellipse cx="564.1" cy="151.4" rx="0.9" ry="0.7" transform="rotate(-20 564.1 151.4)" fill="#d6f8fb"/>
<ellipse cx="561.8" cy="158.3" rx="0.9" ry="0.7" transform="rotate(-20 561.8 158.3)" fill="#d6f8fb"/>
<ellipse cx="570.8" cy="158.4" rx="0.9" ry="0.7" transform="rotate(-20 570.8 158.4)" fill="#d6f8fb"/>
<ellipse cx="565.8" cy="148.9" rx="0.9" ry="0.7" transform="rotate(-20 565.8 148.9)" fill="#d6f8fb"/>
<ellipse cx="577.7" cy="161.9" rx="0.9" ry="0.7" transform="rotate(-20 577.7 161.9)" fill="#d6f8fb"/>
<ellipse cx="578.7" cy="158.9" rx="0.9" ry="0.7" transform="rotate(-20 578.7 158.9)" fill="#d6f8fb"/>
<ellipse cx="577.8" cy="157.7" rx="0.9" ry="0.7" transform="rotate(-20 577.8 157.7)" fill="#d6f8fb"/>
<ellipse cx="563.2" cy="153.9" rx="0.9" ry="0.7" transform="rotate(-20 563.2 153.9)" fill="#d6f8fb"/>
<ellipse cx="566.4" cy="145.6" rx="0.9" ry="0.7" transform="rotate(-20 566.4 145.6)" fill="#d6f8fb"/>
<ellipse cx="558.3" cy="149.9" rx="0.9" ry="0.7" transform="rotate(-20 558.3 149.9)" fill="#d6f8fb"/>
<ellipse cx="564.0" cy="156.9" rx="0.9" ry="0.7" transform="rotate(-20 564.0 156.9)" fill="#d6f8fb"/>
<ellipse cx="581.2" cy="152.7" rx="0.9" ry="0.7" transform="rotate(-20 581.2 152.7)" fill="#d6f8fb"/>
<ellipse cx="580.8" cy="162.0" rx="0.9" ry="0.7" transform="rotate(-20 580.8 162.0)" fill="#d6f8fb"/>
<ellipse cx="581.2" cy="151.3" rx="0.9" ry="0.7" transform="rotate(-20 581.2 151.3)" fill="#d6f8fb"/>
<ellipse cx="563.1" cy="149.0" rx="0.9" ry="0.7" transform="rotate(-20 563.1 149.0)" fill="#d6f8fb"/>
<ellipse cx="618.4" cy="159.3" rx="0.9" ry="1.9" transform="rotate(-10 618.4 159.3)" fill="#d6f8fb"/>
<ellipse cx="617.4" cy="166.9" rx="0.9" ry="1.9" transform="rotate(-10 617.4 166.9)" fill="#d6f8fb"/>
<ellipse cx="608.9" cy="185.9" rx="0.9" ry="1.9" transform="rotate(-10 608.9 185.9)" fill="#d6f8fb"/>
<ellipse cx="605.1" cy="193.5" rx="0.9" ry="1.9" transform="rotate(-10 605.1 193.5)" fill="#d6f8fb"/>
<ellipse cx="589.9" cy="178.3" rx="0.9" ry="1.9" transform="rotate(-10 589.9 178.3)" fill="#d6f8fb"/>
<ellipse cx="595.6" cy="199.2" rx="0.9" ry="1.9" transform="rotate(-10 595.6 199.2)" fill="#d6f8fb"/>
<ellipse cx="625.0" cy="189.7" rx="0.9" ry="1.9" transform="rotate(-10 625.0 189.7)" fill="#d6f8fb"/>
<ellipse cx="575.1" cy="218.1" rx="5.9" ry="4.7" transform="rotate(0 575.1 218.1)" fill="#d6f8fb"/>
<ellipse cx="589.0" cy="227.6" rx="5.7" ry="4.2" transform="rotate(30 589.0 227.6)" fill="#d6f8fb"/>
<ellipse cx="612.7" cy="215.9" rx="3.8" ry="5.2" transform="rotate(-10 612.7 215.9)" fill="#d6f8fb"/>
<ellipse cx="610.8" cy="199.7" rx="2.4" ry="3.3" transform="rotate(-10 610.8 199.7)" fill="#d6f8fb"/>
<ellipse cx="623.1" cy="206.4" rx="2.8" ry="5.7" transform="rotate(-10 623.1 206.4)" fill="#d6f8fb"/>
<ellipse cx="603.2" cy="223.5" rx="3.8" ry="3.8" transform="rotate(0 603.2 223.5)" fill="#d6f8fb"/>
<ellipse cx="552.0" cy="200.7" rx="1.3" ry="2.8" transform="rotate(25 552.0 200.7)" fill="#d6f8fb"/>
<ellipse cx="548.2" cy="212.1" rx="1.7" ry="2.8" transform="rotate(25 548.2 212.1)" fill="#d6f8fb"/>
<ellipse cx="525.4" cy="219.7" rx="1.3" ry="2.8" transform="rotate(25 525.4 219.7)" fill="#d6f8fb"/>
<ellipse cx="532.0" cy="218.7" rx="1.3" ry="2.8" transform="rotate(25 532.0 218.7)" fill="#d6f8fb"/>
<ellipse cx="519.7" cy="229.2" rx="1.3" ry="2.8" transform="rotate(25 519.7 229.2)" fill="#d6f8fb"/>
<ellipse cx="584.2" cy="204.5" rx="1.3" ry="2.8" transform="rotate(25 584.2 204.5)" fill="#d6f8fb"/>
<ellipse cx="578.5" cy="202.6" rx="1.3" ry="2.8" transform="rotate(25 578.5 202.6)" fill="#d6f8fb"/>
<ellipse cx="593.7" cy="202.6" rx="1.3" ry="2.8" transform="rotate(25 593.7 202.6)" fill="#d6f8fb"/>
<polygon points="559.5,270.9 570.9,261.4 586.1,258.6 597.5,260.5 603.2,267.1 599.4,276.6 589.9,284.2 576.6,288.0 557.6,288.0" fill="#d6f8fb"/>
<ellipse cx="608.9" cy="265.2" rx="2.1" ry="1.1" transform="rotate(0 608.9 265.2)" fill="#d6f8fb"/>
<ellipse cx="614.6" cy="270.9" rx="2.1" ry="1.1" transform="rotate(0 614.6 270.9)" fill="#d6f8fb"/>
<ellipse cx="620.3" cy="267.1" rx="2.1" ry="1.1" transform="rotate(0 620.3 267.1)" fill="#d6f8fb"/>
<ellipse cx="626.0" cy="276.6" rx="2.1" ry="1.1" transform="rotate(0 626.0 276.6)" fill="#d6f8fb"/>
<ellipse cx="612.7" cy="278.5" rx="2.1" ry="1.1" transform="rotate(0 612.7 278.5)" fill="#d6f8fb"/>
<ellipse cx="605.1" cy="280.4" rx="2.1" ry="1.1" transform="rotate(0 605.1 280.4)" fill="#d6f8fb"/>
<ellipse cx="620.3" cy="280.4" rx="2.1" ry="1.1" transform="rotate(0 620.3 280.4)" fill="#d6f8fb"/>
<ellipse cx="627.9" cy="269.0" rx="2.1" ry="1.1" transform="rotate(0 627.9 269.0)" fill="#d6f8fb"/>
<ellipse cx="567.1" cy="285.7" rx="6.6" ry="5.2" transform="rotate(0 567.1 285.7)" fill="#d6f8fb"/>
<polygon points="561.4,306.6 570.9,302.8 580.4,304.7 589.9,312.3 597.5,318.0 599.4,329.3 595.6,338.8 586.1,336.9 576.6,338.8 567.1,331.2 559.5,325.5 562.4,316.1" fill="#d6f8fb"/>
<polygon points="612.7,329.3 620.3,326.5 627.9,333.1 633.9,338.8 633.9,371.1 614.6,371.1 613.6,355.9 611.7,342.6" fill="#d6f8fb"/>
<ellipse cx="587.1" cy="366.3" rx="4.7" ry="5.7" transform="rotate(0 587.1 366.3)" fill="#d6f8fb"/>
<ellipse cx="519.7" cy="299.0" rx="3.4" ry="4.7" transform="rotate(0 519.7 299.0)" fill="#d6f8fb"/>
<ellipse cx="536.8" cy="308.5" rx="1.9" ry="3.8" transform="rotate(0 536.8 308.5)" fill="#d6f8fb"/>
<ellipse cx="540.6" cy="294.2" rx="2.8" ry="3.8" transform="rotate(0 540.6 294.2)" fill="#d6f8fb"/>
<polygon points="514.0,352.1 525.4,355.9 540.6,359.7 555.7,365.4 552.0,373.0 514.0,373.0" fill="#d6f8fb"/>
<ellipse cx="578.5" cy="344.5" rx="1.3" ry="1.3" transform="rotate(0 578.5 344.5)" fill="#d6f8fb"/>
<ellipse cx="586.1" cy="346.4" rx="1.3" ry="1.3" transform="rotate(0 586.1 346.4)" fill="#d6f8fb"/>
<ellipse cx="552.0" cy="342.6" rx="1.3" ry="1.3" transform="rotate(0 552.0 342.6)" fill="#d6f8fb"/>
<ellipse cx="542.5" cy="346.4" rx="1.3" ry="1.3" transform="rotate(0 542.5 346.4)" fill="#d6f8fb"/>
<polygon points="580.4,384.0 584.2,368.8 589.9,365.0 593.7,370.7 591.8,384.0 586.1,397.3 589.9,408.6 597.5,418.1 603.2,421.9 605.1,429.5 597.5,437.1 589.9,440.0 580.4,439.0 570.9,435.2 565.2,429.5 567.1,421.9 574.7,418.1 576.6,406.7 578.5,395.4" fill="#d6f8fb"/>
<ellipse cx="544.4" cy="425.7" rx="3.8" ry="2.8" transform="rotate(0 544.4 425.7)" fill="#d6f8fb"/>
<ellipse cx="553.8" cy="423.8" rx="4.7" ry="2.8" transform="rotate(0 553.8 423.8)" fill="#d6f8fb"/>
<ellipse cx="561.4" cy="427.6" rx="3.8" ry="2.8" transform="rotate(0 561.4 427.6)" fill="#d6f8fb"/>
<ellipse cx="540.6" cy="430.5" rx="1.9" ry="1.5" transform="rotate(0 540.6 430.5)" fill="#d6f8fb"/>
<ellipse cx="611.7" cy="394.4" rx="7.6" ry="4.7" transform="rotate(0 611.7 394.4)" fill="#d6f8fb"/>
<ellipse cx="614.6" cy="415.3" rx="5.7" ry="4.7" transform="rotate(0 614.6 415.3)" fill="#d6f8fb"/>
<polygon points="519.7,365.0 552.0,365.0 550.1,372.6 542.5,378.3 533.0,376.4 523.5,371.6" fill="#d6f8fb"/>
<ellipse cx="620.3" cy="366.9" rx="5.7" ry="3.8" transform="rotate(0 620.3 366.9)" fill="#d6f8fb"/>
<polyline points="512.8,306.8 516.7,323.3 519.0,335.8 519.5,349.0 522.2,357.8" fill="none" stroke="#d6f8fb" stroke-width="13" stroke-linecap="round" stroke-linejoin="round"/>
<polyline points="506.5,337.4 511.0,348.0 515.9,359.4" fill="none" stroke="#d6f8fb" stroke-width="8" stroke-linecap="round" stroke-linejoin="round"/>
<polyline points="523.0,324.0 526.9,332.7" fill="none" stroke="#d6f8fb" stroke-width="7" stroke-linecap="round" stroke-linejoin="round"/>
<polyline points="519.0,296.0 519.3,302.0" fill="none" stroke="#d6f8fb" stroke-width="8" stroke-linecap="round" stroke-linejoin="round"/>
<ellipse cx="440.0" cy="280.0" rx="0.1" ry="0.1" transform="rotate(0 440.0 280.0)" fill="#d6f8fb"/>
<polyline points="492.0,354.0 500.0,358.0 508.0,362.0" fill="none" stroke="#d6f8fb" stroke-width="9" stroke-linecap="round" stroke-linejoin="round"/>
<ellipse cx="468.5" cy="288.5" rx="4.2" ry="4.4" transform="rotate(0 468.5 288.5)" fill="#d6f8fb"/>
<ellipse cx="536.8" cy="297.1" rx="2.3" ry="4.2" transform="rotate(25 536.8 297.1)" fill="#d6f8fb"/>
<ellipse cx="447.6" cy="293.3" rx="6.6" ry="4.7" transform="rotate(0 447.6 293.3)" fill="#d6f8fb"/>
<ellipse cx="459.0" cy="304.7" rx="2.8" ry="4.7" transform="rotate(0 459.0 304.7)" fill="#d6f8fb"/>
<ellipse cx="476.1" cy="297.1" rx="2.8" ry="3.8" transform="rotate(0 476.1 297.1)" fill="#d6f8fb"/>
<ellipse cx="529.2" cy="302.8" rx="2.3" ry="4.7" transform="rotate(15 529.2 302.8)" fill="#d6f8fb"/>
<ellipse cx="542.5" cy="300.9" rx="1.9" ry="4.7" transform="rotate(20 542.5 300.9)" fill="#d6f8fb"/>
<ellipse cx="493.1" cy="299.0" rx="1.9" ry="4.7" transform="rotate(15 493.1 299.0)" fill="#d6f8fb"/>
<ellipse cx="490.3" cy="310.4" rx="1.9" ry="3.8" transform="rotate(15 490.3 310.4)" fill="#d6f8fb"/>
<ellipse cx="539.6" cy="310.4" rx="1.5" ry="3.8" transform="rotate(20 539.6 310.4)" fill="#d6f8fb"/>
<ellipse cx="529.2" cy="316.1" rx="1.5" ry="3.8" transform="rotate(-15 529.2 316.1)" fill="#d6f8fb"/>
<ellipse cx="501.1" cy="271.2" rx="1.7" ry="3.7" transform="rotate(25 501.1 271.2)" fill="#d6f8fb"/>
<ellipse cx="508.6" cy="275.2" rx="1.1" ry="3.8" transform="rotate(25 508.6 275.2)" fill="#d6f8fb"/>
<ellipse cx="525.0" cy="305.0" rx="1.1" ry="3.3" transform="rotate(25 525.0 305.0)" fill="#d6f8fb"/>
<ellipse cx="528.3" cy="279.3" rx="1.1" ry="2.5" transform="rotate(25 528.3 279.3)" fill="#d6f8fb"/>
<ellipse cx="511.3" cy="198.6" rx="1.1" ry="3.1" transform="rotate(25 511.3 198.6)" fill="#d6f8fb"/>
<ellipse cx="499.5" cy="312.2" rx="1.4" ry="4.1" transform="rotate(25 499.5 312.2)" fill="#d6f8fb"/>
<ellipse cx="507.5" cy="286.1" rx="1.3" ry="3.2" transform="rotate(25 507.5 286.1)" fill="#d6f8fb"/>
<ellipse cx="482.6" cy="223.3" rx="1.2" ry="2.7" transform="rotate(25 482.6 223.3)" fill="#d6f8fb"/>
<ellipse cx="543.4" cy="248.1" rx="1.6" ry="3.5" transform="rotate(25 543.4 248.1)" fill="#d6f8fb"/>
<ellipse cx="572.3" cy="247.6" rx="1.1" ry="4.1" transform="rotate(25 572.3 247.6)" fill="#d6f8fb"/>
<ellipse cx="545.1" cy="229.1" rx="1.1" ry="3.3" transform="rotate(25 545.1 229.1)" fill="#d6f8fb"/>
<ellipse cx="453.6" cy="198.7" rx="1.6" ry="2.9" transform="rotate(25 453.6 198.7)" fill="#d6f8fb"/>
<ellipse cx="515.5" cy="254.9" rx="1.1" ry="4.3" transform="rotate(25 515.5 254.9)" fill="#d6f8fb"/>
<ellipse cx="468.7" cy="229.1" rx="1.7" ry="4.5" transform="rotate(25 468.7 229.1)" fill="#d6f8fb"/>
<ellipse cx="468.4" cy="247.2" rx="1.6" ry="4.1" transform="rotate(25 468.4 247.2)" fill="#d6f8fb"/>
<ellipse cx="468.8" cy="227.5" rx="1.6" ry="3.3" transform="rotate(25 468.8 227.5)" fill="#d6f8fb"/>
<ellipse cx="480.0" cy="200.6" rx="1.1" ry="4.0" transform="rotate(25 480.0 200.6)" fill="#d6f8fb"/>
<ellipse cx="472.8" cy="277.2" rx="1.3" ry="3.6" transform="rotate(25 472.8 277.2)" fill="#d6f8fb"/>
<ellipse cx="517.6" cy="315.6" rx="1.1" ry="2.9" transform="rotate(25 517.6 315.6)" fill="#d6f8fb"/>
<ellipse cx="473.7" cy="217.5" rx="1.6" ry="4.9" transform="rotate(25 473.7 217.5)" fill="#d6f8fb"/>
<ellipse cx="496.9" cy="205.1" rx="1.0" ry="4.9" transform="rotate(25 496.9 205.1)" fill="#d6f8fb"/>
<ellipse cx="520.5" cy="232.5" rx="1.1" ry="4.3" transform="rotate(25 520.5 232.5)" fill="#d6f8fb"/>
<ellipse cx="515.5" cy="313.6" rx="1.5" ry="3.2" transform="rotate(25 515.5 313.6)" fill="#d6f8fb"/>
<ellipse cx="563.8" cy="219.6" rx="1.0" ry="3.2" transform="rotate(25 563.8 219.6)" fill="#d6f8fb"/>
<ellipse cx="500.2" cy="198.8" rx="1.1" ry="3.4" transform="rotate(25 500.2 198.8)" fill="#d6f8fb"/>
<ellipse cx="517.2" cy="209.1" rx="1.3" ry="4.7" transform="rotate(25 517.2 209.1)" fill="#d6f8fb"/>
<ellipse cx="533.3" cy="274.7" rx="1.1" ry="2.6" transform="rotate(25 533.3 274.7)" fill="#d6f8fb"/>
<ellipse cx="505.1" cy="295.9" rx="1.2" ry="5.0" transform="rotate(25 505.1 295.9)" fill="#d6f8fb"/>
<ellipse cx="539.5" cy="292.0" rx="1.6" ry="4.8" transform="rotate(25 539.5 292.0)" fill="#d6f8fb"/>
<ellipse cx="487.5" cy="289.3" rx="1.7" ry="4.7" transform="rotate(25 487.5 289.3)" fill="#d6f8fb"/>
<ellipse cx="496.3" cy="304.6" rx="1.6" ry="3.9" transform="rotate(25 496.3 304.6)" fill="#d6f8fb"/>
<ellipse cx="524.4" cy="245.4" rx="1.4" ry="4.0" transform="rotate(25 524.4 245.4)" fill="#d6f8fb"/>
<ellipse cx="538.3" cy="246.3" rx="1.6" ry="4.0" transform="rotate(25 538.3 246.3)" fill="#d6f8fb"/>
<ellipse cx="499.5" cy="311.6" rx="1.1" ry="4.4" transform="rotate(25 499.5 311.6)" fill="#d6f8fb"/>
<ellipse cx="504.9" cy="223.4" rx="1.5" ry="3.7" transform="rotate(25 504.9 223.4)" fill="#d6f8fb"/>
<ellipse cx="523.0" cy="323.5" rx="1.2" ry="2.5" transform="rotate(25 523.0 323.5)" fill="#d6f8fb"/>
<ellipse cx="467.3" cy="214.6" rx="1.7" ry="4.1" transform="rotate(25 467.3 214.6)" fill="#d6f8fb"/>
<ellipse cx="499.7" cy="319.3" rx="1.2" ry="4.2" transform="rotate(25 499.7 319.3)" fill="#d6f8fb"/>
<ellipse cx="466.8" cy="252.5" rx="1.6" ry="4.8" transform="rotate(25 466.8 252.5)" fill="#d6f8fb"/>
<ellipse cx="558.8" cy="245.7" rx="1.4" ry="3.3" transform="rotate(25 558.8 245.7)" fill="#d6f8fb"/>
<ellipse cx="477.4" cy="214.5" rx="1.3" ry="3.2" transform="rotate(25 477.4 214.5)" fill="#d6f8fb"/>
<ellipse cx="468.9" cy="250.0" rx="1.5" ry="3.7" transform="rotate(25 468.9 250.0)" fill="#d6f8fb"/>
<ellipse cx="450.1" cy="194.6" rx="1.7" ry="2.6" transform="rotate(25 450.1 194.6)" fill="#d6f8fb"/>
<ellipse cx="535.7" cy="272.7" rx="1.2" ry="4.5" transform="rotate(25 535.7 272.7)" fill="#d6f8fb"/>
<ellipse cx="442.6" cy="209.7" rx="1.3" ry="2.6" transform="rotate(25 442.6 209.7)" fill="#d6f8fb"/>
<ellipse cx="552.0" cy="224.4" rx="1.1" ry="2.6" transform="rotate(25 552.0 224.4)" fill="#d6f8fb"/>
<ellipse cx="524.9" cy="254.7" rx="1.5" ry="4.1" transform="rotate(25 524.9 254.7)" fill="#d6f8fb"/>
<ellipse cx="532.4" cy="218.9" rx="1.4" ry="2.9" transform="rotate(25 532.4 218.9)" fill="#d6f8fb"/>
<ellipse cx="536.4" cy="216.0" rx="1.2" ry="3.4" transform="rotate(25 536.4 216.0)" fill="#d6f8fb"/>
<ellipse cx="534.1" cy="265.5" rx="1.5" ry="4.4" transform="rotate(25 534.1 265.5)" fill="#d6f8fb"/>
<ellipse cx="493.1" cy="304.8" rx="1.7" ry="2.7" transform="rotate(25 493.1 304.8)" fill="#d6f8fb"/>
<ellipse cx="524.4" cy="321.9" rx="1.3" ry="3.9" transform="rotate(25 524.4 321.9)" fill="#d6f8fb"/>
<ellipse cx="527.9" cy="219.7" rx="1.5" ry="4.5" transform="rotate(25 527.9 219.7)" fill="#d6f8fb"/>
<ellipse cx="526.6" cy="294.1" rx="1.2" ry="4.7" transform="rotate(25 526.6 294.1)" fill="#d6f8fb"/>
<ellipse cx="512.5" cy="304.7" rx="1.2" ry="4.8" transform="rotate(25 512.5 304.7)" fill="#d6f8fb"/>
<polygon points="502.8,274.0 506.6,262.6 516.1,251.2 523.6,246.5 535.0,242.7 544.5,240.8 552.1,238.0 557.8,232.3 563.5,228.5 566.3,233.2 560.6,242.7 552.1,246.5 542.6,248.4 535.0,253.1 527.4,260.7 520.8,268.3 515.1,275.9 510.4,279.7" fill="#a9eff8"/>
<polygon points="482.8,275.9 484.7,260.7 489.5,254.1 493.7,252.8 491.4,262.6 487.6,275.9 484.7,289.2 481.9,289.2" fill="#a9eff8"/>
<ellipse cx="545.5" cy="208.5" rx="1.1" ry="2.1" transform="rotate(20 545.5 208.5)" fill="#a9eff8"/>
<ellipse cx="499.0" cy="287.3" rx="2.8" ry="2.8" transform="rotate(0 499.0 287.3)" fill="#a9eff8"/>
<ellipse cx="429.8" cy="170.3" rx="2.4" ry="7.4" transform="rotate(3 429.8 170.3)" fill="#a9eff8"/>
<ellipse cx="389.5" cy="174.5" rx="1.8" ry="8.3" transform="rotate(8 389.5 174.5)" fill="#a9eff8"/>
<ellipse cx="420.9" cy="176.4" rx="0.8" ry="3.8" transform="rotate(5 420.9 176.4)" fill="#a9eff8"/>
<ellipse cx="379.5" cy="191.6" rx="2.1" ry="3.8" transform="rotate(10 379.5 191.6)" fill="#a9eff8"/>
<ellipse cx="400.4" cy="193.5" rx="1.9" ry="4.7" transform="rotate(5 400.4 193.5)" fill="#a9eff8"/>
<ellipse cx="471.5" cy="197.3" rx="2.1" ry="6.5" transform="rotate(20 471.5 197.3)" fill="#a9eff8"/>
<ellipse cx="404.7" cy="213.0" rx="2.8" ry="7.8" transform="rotate(15 404.7 213.0)" fill="#a9eff8"/>
<ellipse cx="398.5" cy="218.7" rx="1.3" ry="3.8" transform="rotate(12 398.5 218.7)" fill="#a9eff8"/>
<ellipse cx="387.5" cy="201.6" rx="2.1" ry="5.3" transform="rotate(10 387.5 201.6)" fill="#a9eff8"/>
<ellipse cx="410.8" cy="197.8" rx="1.1" ry="3.8" transform="rotate(10 410.8 197.8)" fill="#a9eff8"/>
<ellipse cx="412.7" cy="234.8" rx="1.8" ry="7.7" transform="rotate(15 412.7 234.8)" fill="#a9eff8"/>
<ellipse cx="425.0" cy="236.7" rx="1.1" ry="7.1" transform="rotate(15 425.0 236.7)" fill="#a9eff8"/>
<ellipse cx="436.4" cy="259.5" rx="1.9" ry="3.8" transform="rotate(10 436.4 259.5)" fill="#a9eff8"/>
<ellipse cx="434.5" cy="274.7" rx="1.5" ry="5.7" transform="rotate(5 434.5 274.7)" fill="#a9eff8"/>
<ellipse cx="462.4" cy="205.4" rx="1.5" ry="6.5" transform="rotate(12 462.4 205.4)" fill="#a9eff8"/>
<ellipse cx="470.6" cy="198.8" rx="1.5" ry="4.2" transform="rotate(12 470.6 198.8)" fill="#a9eff8"/>
<ellipse cx="458.2" cy="255.7" rx="2.1" ry="2.8" transform="rotate(20 458.2 255.7)" fill="#a9eff8"/>
<ellipse cx="467.7" cy="288.5" rx="3.0" ry="3.4" transform="rotate(0 467.7 288.5)" fill="#a9eff8"/>
<ellipse cx="476.3" cy="287.6" rx="1.7" ry="1.9" transform="rotate(0 476.3 287.6)" fill="#a9eff8"/>
<ellipse cx="485.7" cy="285.7" rx="1.5" ry="3.8" transform="rotate(10 485.7 285.7)" fill="#a9eff8"/>
<polygon points="423.1,421.9 426.9,412.4 428.8,421.9 435.5,421.9 437.4,410.5 440.2,421.9 445.9,423.8 445.0,440.9 442.1,456.1 425.0,456.1 425.0,440.9" fill="#a9eff8"/>
<ellipse cx="508.8" cy="180.6" rx="2.3" ry="4.0" transform="rotate(0 508.8 180.6)" fill="#a9eff8"/>
<ellipse cx="521.2" cy="177.4" rx="1.8" ry="5.9" transform="rotate(5 521.2 177.4)" fill="#a9eff8"/>
<ellipse cx="534.6" cy="183.1" rx="1.5" ry="2.6" transform="rotate(10 534.6 183.1)" fill="#a9eff8"/>
<ellipse cx="521.0" cy="177.4" rx="1.8" ry="6.5" transform="rotate(5 521.0 177.4)" fill="#a9eff8"/>
<ellipse cx="534.5" cy="183.6" rx="1.5" ry="3.1" transform="rotate(10 534.5 183.6)" fill="#a9eff8"/>
<ellipse cx="616.5" cy="183.1" rx="1.5" ry="5.3" transform="rotate(-12 616.5 183.1)" fill="#a9eff8"/>
<ellipse cx="620.3" cy="199.2" rx="2.1" ry="2.6" transform="rotate(0 620.3 199.2)" fill="#a9eff8"/>
<ellipse cx="611.7" cy="199.2" rx="1.5" ry="2.3" transform="rotate(-20 611.7 199.2)" fill="#a9eff8"/>
<ellipse cx="552.9" cy="200.1" rx="1.3" ry="1.9" transform="rotate(0 552.9 200.1)" fill="#a9eff8"/>
<ellipse cx="572.8" cy="217.8" rx="2.1" ry="3.4" transform="rotate(10 572.8 217.8)" fill="#a9eff8"/>
<ellipse cx="577.9" cy="218.7" rx="1.9" ry="3.2" transform="rotate(10 577.9 218.7)" fill="#a9eff8"/>
<ellipse cx="589.9" cy="228.4" rx="3.8" ry="2.7" transform="rotate(30 589.9 228.4)" fill="#a9eff8"/>
<ellipse cx="620.3" cy="200.7" rx="2.1" ry="3.8" transform="rotate(-10 620.3 200.7)" fill="#a9eff8"/>
<ellipse cx="597.5" cy="206.4" rx="1.4" ry="2.4" transform="rotate(-10 597.5 206.4)" fill="#a9eff8"/>
<ellipse cx="545.3" cy="207.9" rx="1.1" ry="1.9" transform="rotate(20 545.3 207.9)" fill="#a9eff8"/>
<ellipse cx="556.1" cy="220.0" rx="1.9" ry="2.5" transform="rotate(20 556.1 220.0)" fill="#a9eff8"/>
<ellipse cx="570.9" cy="275.6" rx="4.7" ry="5.7" transform="rotate(10 570.9 275.6)" fill="#a9eff8"/>
<ellipse cx="579.5" cy="269.0" rx="3.8" ry="2.8" transform="rotate(0 579.5 269.0)" fill="#a9eff8"/>
<ellipse cx="603.2" cy="266.2" rx="2.8" ry="1.9" transform="rotate(0 603.2 266.2)" fill="#a9eff8"/>
<ellipse cx="565.2" cy="284.2" rx="3.8" ry="2.8" transform="rotate(0 565.2 284.2)" fill="#a9eff8"/>
<ellipse cx="570.9" cy="282.8" rx="3.2" ry="2.4" transform="rotate(0 570.9 282.8)" fill="#a9eff8"/>
<ellipse cx="574.7" cy="310.4" rx="2.8" ry="3.4" transform="rotate(0 574.7 310.4)" fill="#a9eff8"/>
<ellipse cx="575.7" cy="318.9" rx="1.7" ry="2.4" transform="rotate(0 575.7 318.9)" fill="#a9eff8"/>
<ellipse cx="591.8" cy="331.2" rx="3.3" ry="4.7" transform="rotate(0 591.8 331.2)" fill="#a9eff8"/>
<ellipse cx="587.1" cy="319.8" rx="2.4" ry="1.9" transform="rotate(0 587.1 319.8)" fill="#a9eff8"/>
<ellipse cx="566.2" cy="320.8" rx="1.9" ry="1.9" transform="rotate(0 566.2 320.8)" fill="#a9eff8"/>
<ellipse cx="618.4" cy="332.2" rx="2.4" ry="3.3" transform="rotate(0 618.4 332.2)" fill="#a9eff8"/>
<ellipse cx="624.1" cy="338.8" rx="1.9" ry="2.4" transform="rotate(0 624.1 338.8)" fill="#a9eff8"/>
<ellipse cx="629.7" cy="342.6" rx="1.7" ry="1.9" transform="rotate(0 629.7 342.6)" fill="#a9eff8"/>
<ellipse cx="619.3" cy="365.4" rx="2.8" ry="4.7" transform="rotate(0 619.3 365.4)" fill="#a9eff8"/>
<ellipse cx="587.1" cy="365.4" rx="3.0" ry="4.0" transform="rotate(0 587.1 365.4)" fill="#a9eff8"/>
<ellipse cx="519.7" cy="299.0" rx="2.3" ry="3.2" transform="rotate(0 519.7 299.0)" fill="#a9eff8"/>
<ellipse cx="536.8" cy="297.1" rx="1.7" ry="2.8" transform="rotate(10 536.8 297.1)" fill="#a9eff8"/>
<ellipse cx="524.4" cy="326.5" rx="1.7" ry="3.8" transform="rotate(-20 524.4 326.5)" fill="#a9eff8"/>
<ellipse cx="517.8" cy="287.6" rx="1.9" ry="2.8" transform="rotate(0 517.8 287.6)" fill="#a9eff8"/>
<polygon points="581.4,404.8 584.2,403.0 588.0,410.5 591.8,420.0 595.6,425.7 593.7,433.3 586.1,436.2 578.5,433.3 574.7,429.5 576.6,423.8 580.4,418.1" fill="#a9eff8"/>
<ellipse cx="586.5" cy="383.0" rx="2.5" ry="9.5" transform="rotate(8 586.5 383.0)" fill="#a9eff8"/>
<ellipse cx="607.9" cy="395.4" rx="2.3" ry="2.3" transform="rotate(0 607.9 395.4)" fill="#a9eff8"/>
<ellipse cx="529.2" cy="369.7" rx="4.7" ry="2.3" transform="rotate(20 529.2 369.7)" fill="#a9eff8"/>
<polyline points="512.8,306.8 516.7,323.3 519.0,335.8 519.5,349.0 522.2,357.8" fill="none" stroke="#a9eff8" stroke-width="8" stroke-linecap="round" stroke-linejoin="round"/>
<polyline points="506.5,337.4 511.0,348.0 515.9,359.4" fill="none" stroke="#a9eff8" stroke-width="5" stroke-linecap="round" stroke-linejoin="round"/>
<polyline points="523.0,324.0 526.9,332.7" fill="none" stroke="#a9eff8" stroke-width="4.5" stroke-linecap="round" stroke-linejoin="round"/>
<polyline points="519.0,296.0 519.3,302.0" fill="none" stroke="#a9eff8" stroke-width="5" stroke-linecap="round" stroke-linejoin="round"/>
<ellipse cx="508.8" cy="309.1" rx="2.6" ry="3" fill="#a9eff8"/>
<ellipse cx="501" cy="306.8" rx="2.4" ry="2.2" fill="#a9eff8"/>
<polyline points="498.0,355.0 504.0,360.0" fill="none" stroke="#a9eff8" stroke-width="2.5" stroke-linecap="round" stroke-linejoin="round"/>
<polyline points="504.0,352.0 510.0,358.0" fill="none" stroke="#a9eff8" stroke-width="2.5" stroke-linecap="round" stroke-linejoin="round"/>
<ellipse cx="468.5" cy="288.5" rx="3.2" ry="3.4" transform="rotate(0 468.5 288.5)" fill="#a9eff8"/>
<ellipse cx="486.5" cy="284.7" rx="1.3" ry="4.7" transform="rotate(15 486.5 284.7)" fill="#a9eff8"/>
<ellipse cx="498.4" cy="289.5" rx="1.3" ry="3.8" transform="rotate(15 498.4 289.5)" fill="#a9eff8"/>
<ellipse cx="522.5" cy="283.8" rx="1.3" ry="2.8" transform="rotate(15 522.5 283.8)" fill="#a9eff8"/>
<ellipse cx="519.7" cy="298.0" rx="2.7" ry="4.7" transform="rotate(10 519.7 298.0)" fill="#a9eff8"/>
<ellipse cx="533.9" cy="282.8" rx="1.3" ry="2.3" transform="rotate(15 533.9 282.8)" fill="#a9eff8"/>
</g><g filter="url(#rg2)">
<ellipse cx="520.3" cy="252.8" rx="6.0" ry="4.0" transform="rotate(-35 520.3 252.8)" fill="#7fd8f1"/>
<ellipse cx="508.9" cy="269.3" rx="3.5" ry="6.5" transform="rotate(25 508.9 269.3)" fill="#7fd8f1"/>
<ellipse cx="515.2" cy="261.7" rx="4.5" ry="4.5" transform="rotate(0 515.2 261.7)" fill="#7fd8f1"/>
<ellipse cx="535.4" cy="245.9" rx="7.5" ry="3.2" transform="rotate(-28 535.4 245.9)" fill="#7fd8f1"/>
<ellipse cx="514.6" cy="283.9" rx="2.0" ry="3.5" transform="rotate(10 514.6 283.9)" fill="#7fd8f1"/>
<ellipse cx="549.4" cy="241.5" rx="4.5" ry="2.5" transform="rotate(-35 549.4 241.5)" fill="#7fd8f1"/>
<ellipse cx="555.7" cy="244.0" rx="4.0" ry="2.2" transform="rotate(-30 555.7 244.0)" fill="#7fd8f1"/>
<ellipse cx="527.0" cy="249.0" rx="4.0" ry="3.0" transform="rotate(-30 527.0 249.0)" fill="#7fd8f1"/>
<polygon points="485.3,264.5 488.5,256.0 491.8,254.1 489.5,262.6 486.6,272.1" fill="#7fd8f1"/>
<ellipse cx="540.7" cy="291.5" rx="2.8" ry="1.3" transform="rotate(0 540.7 291.5)" fill="#7fd8f1"/>
<ellipse cx="429.8" cy="170.3" rx="1.5" ry="5.9" transform="rotate(3 429.8 170.3)" fill="#7fd8f1"/>
<ellipse cx="389.5" cy="174.5" rx="1.1" ry="6.6" transform="rotate(8 389.5 174.5)" fill="#7fd8f1"/>
<ellipse cx="388.4" cy="194.4" rx="1.3" ry="6.6" transform="rotate(5 388.4 194.4)" fill="#7fd8f1"/>
<ellipse cx="471.5" cy="197.3" rx="1.3" ry="5.2" transform="rotate(20 471.5 197.3)" fill="#7fd8f1"/>
<ellipse cx="462.6" cy="202.0" rx="1.1" ry="1.5" transform="rotate(10 462.6 202.0)" fill="#7fd8f1"/>
<ellipse cx="404.7" cy="213.0" rx="2.1" ry="6.5" transform="rotate(15 404.7 213.0)" fill="#7fd8f1"/>
<ellipse cx="387.5" cy="201.6" rx="1.3" ry="4.3" transform="rotate(10 387.5 201.6)" fill="#7fd8f1"/>
<ellipse cx="412.7" cy="234.8" rx="1.1" ry="6.2" transform="rotate(15 412.7 234.8)" fill="#7fd8f1"/>
<ellipse cx="462.4" cy="205.4" rx="0.9" ry="5.2" transform="rotate(12 462.4 205.4)" fill="#7fd8f1"/>
<ellipse cx="470.6" cy="198.8" rx="0.9" ry="3.3" transform="rotate(12 470.6 198.8)" fill="#7fd8f1"/>
<ellipse cx="467.7" cy="288.5" rx="2.3" ry="2.7" transform="rotate(0 467.7 288.5)" fill="#7fd8f1"/>
<ellipse cx="434.5" cy="434.3" rx="2.5" ry="9.5" transform="rotate(10 434.5 434.3)" fill="#7fd8f1"/>
<ellipse cx="436.4" cy="454.2" rx="1.5" ry="1.9" transform="rotate(0 436.4 454.2)" fill="#7fd8f1"/>
<ellipse cx="426.0" cy="416.2" rx="0.8" ry="2.8" transform="rotate(0 426.0 416.2)" fill="#7fd8f1"/>
<ellipse cx="437.4" cy="415.3" rx="0.8" ry="3.8" transform="rotate(0 437.4 415.3)" fill="#7fd8f1"/>
<ellipse cx="509.4" cy="181.2" rx="1.3" ry="2.4" transform="rotate(0 509.4 181.2)" fill="#7fd8f1"/>
<ellipse cx="521.2" cy="177.4" rx="1.1" ry="4.7" transform="rotate(5 521.2 177.4)" fill="#7fd8f1"/>
<ellipse cx="534.6" cy="183.1" rx="0.9" ry="2.1" transform="rotate(10 534.6 183.1)" fill="#7fd8f1"/>
<ellipse cx="521.0" cy="177.4" rx="1.1" ry="5.2" transform="rotate(5 521.0 177.4)" fill="#7fd8f1"/>
<ellipse cx="534.5" cy="183.6" rx="0.9" ry="2.5" transform="rotate(10 534.5 183.6)" fill="#7fd8f1"/>
<ellipse cx="616.5" cy="183.1" rx="0.9" ry="4.3" transform="rotate(-12 616.5 183.1)" fill="#7fd8f1"/>
<ellipse cx="620.3" cy="199.2" rx="1.3" ry="2.1" transform="rotate(0 620.3 199.2)" fill="#7fd8f1"/>
<ellipse cx="521.6" cy="194.4" rx="1.5" ry="2.1" transform="rotate(10 521.6 194.4)" fill="#7fd8f1"/>
<ellipse cx="527.7" cy="198.8" rx="0.9" ry="1.1" transform="rotate(0 527.7 198.8)" fill="#7fd8f1"/>
<ellipse cx="590.9" cy="229.5" rx="1.9" ry="1.5" transform="rotate(30 590.9 229.5)" fill="#7fd8f1"/>
<ellipse cx="612.7" cy="215.9" rx="2.3" ry="3.2" transform="rotate(-10 612.7 215.9)" fill="#7fd8f1"/>
<ellipse cx="571.9" cy="277.0" rx="1.5" ry="3.8" transform="rotate(10 571.9 277.0)" fill="#7fd8f1"/>
<ellipse cx="564.3" cy="286.6" rx="2.8" ry="2.8" transform="rotate(0 564.3 286.6)" fill="#7fd8f1"/>
<ellipse cx="575.1" cy="309.8" rx="1.4" ry="1.7" transform="rotate(0 575.1 309.8)" fill="#7fd8f1"/>
<ellipse cx="585.2" cy="429.9" rx="4.7" ry="3.0" transform="rotate(10 585.2 429.9)" fill="#7fd8f1"/>
<polyline points="512.8,306.8 516.7,323.3" fill="none" stroke="#7fd8f1" stroke-width="4.5" stroke-linecap="round" stroke-linejoin="round"/>
<polyline points="516.7,323.3 519.0,335.8" fill="none" stroke="#7fd8f1" stroke-width="3" stroke-linecap="round" stroke-linejoin="round"/>
<polyline points="516.5,342.0 519.0,349.0 522.2,357.8" fill="none" stroke="#7fd8f1" stroke-width="6" stroke-linecap="round" stroke-linejoin="round"/>
<polyline points="506.5,337.4 511.0,348.0 515.9,359.4" fill="none" stroke="#7fd8f1" stroke-width="2.5" stroke-linecap="round" stroke-linejoin="round"/>
<polyline points="523.0,324.0 526.9,332.7" fill="none" stroke="#7fd8f1" stroke-width="2.5" stroke-linecap="round" stroke-linejoin="round"/>
<polyline points="519.0,296.0 519.3,302.0" fill="none" stroke="#7fd8f1" stroke-width="3" stroke-linecap="round" stroke-linejoin="round"/>
<ellipse cx="508.8" cy="309.1" rx="1.7" ry="2.2" fill="#7fd8f1"/>
<ellipse cx="501" cy="306.8" rx="1.4" ry="1.3" fill="#7fd8f1"/>
<ellipse cx="468.5" cy="288.5" rx="2.3" ry="2.5" transform="rotate(0 468.5 288.5)" fill="#7fd8f1"/>
<ellipse cx="513.1" cy="282.8" rx="1.5" ry="2.8" transform="rotate(15 513.1 282.8)" fill="#7fd8f1"/>
<ellipse cx="519.7" cy="298.0" rx="1.7" ry="3.4" transform="rotate(10 519.7 298.0)" fill="#7fd8f1"/>
<ellipse cx="536.8" cy="297.1" rx="1.3" ry="2.8" transform="rotate(25 536.8 297.1)" fill="#7fd8f1"/>
<ellipse cx="531.6" cy="249.7" rx="2.5" ry="1.8" transform="rotate(-25 531.6 249.7)" fill="#5cb4ec"/>
<ellipse cx="541.1" cy="245.0" rx="4.5" ry="2.0" transform="rotate(-25 541.1 245.0)" fill="#5cb4ec"/>
<ellipse cx="553.8" cy="243.7" rx="3.2" ry="1.6" transform="rotate(-25 553.8 243.7)" fill="#5cb4ec"/>
<ellipse cx="548.7" cy="241.5" rx="2.0" ry="2.5" transform="rotate(10 548.7 241.5)" fill="#5cb4ec"/>
<polygon points="482.7,289.2 484.7,275.9 487.2,272.1 485.7,283.5 483.8,293.0 481.9,293.0" fill="#5cb4ec"/>
<ellipse cx="471.9" cy="196.3" rx="0.8" ry="2.8" transform="rotate(20 471.9 196.3)" fill="#5cb4ec"/>
<ellipse cx="404.7" cy="213.0" rx="1.3" ry="5.2" transform="rotate(15 404.7 213.0)" fill="#5cb4ec"/>
<polyline points="512.8,306.8 516.7,323.3" fill="none" stroke="#5cb4ec" stroke-width="3" stroke-linecap="round" stroke-linejoin="round"/>
<polyline points="516.5,342.0 519.0,349.0 522.2,357.8" fill="none" stroke="#5cb4ec" stroke-width="4" stroke-linecap="round" stroke-linejoin="round"/>
<ellipse cx="541.8" cy="245.0" rx="2.5" ry="1.2" transform="rotate(-25 541.8 245.0)" fill="#4a8aea"/>
<ellipse cx="554.4" cy="243.7" rx="2.0" ry="1.0" transform="rotate(-25 554.4 243.7)" fill="#4a8aea"/>
<polyline points="518.5,346.0 520.0,352.0" fill="none" stroke="#4a8aea" stroke-width="2.5" stroke-linecap="round" stroke-linejoin="round"/>
</g>
<polygon points="315.2,75.3 321.0,77.8 327.3,79.1 341.3,76.6 351.4,74.6 359.0,74.6 359.5,79.1 357.7,84.2 355.2,88.0 350.1,91.8 343.8,98.1 341.3,103.7 334.9,104.4 328.6,102.7 336.2,107.0 341.3,105.2 337.5,110.3 329.9,113.3 327.3,113.8 332.4,118.4 340.0,114.6 348.9,110.0 361.5,110.8 376.7,111.5 385.6,110.8 387.6,117.6 384.3,127.7 380.5,137.8 374.2,148.0 369.1,154.3 357.7,156.8 353.9,160.6 361.5,159.4 366.6,161.9 367.8,164.4 361.5,167.0 356.5,170.8 343.8,172.0 351.4,173.3 360.3,173.3 371.6,172.0 380.5,177.1 389.4,185.9 393.7,196.9 397.5,206.4 401.3,216.8 407.0,223.5 415.5,226.3 421.2,229.2 426.0,235.8 430.7,240.5 429.8,245.3 433.6,251.9 435.5,255.7 426.9,256.1 420.3,256.7 417.4,258.0 426.9,257.6 433.6,260.5 439.3,260.5 438.3,264.3 441.8,266.9 445.1,272.6 445.5,279.7 442.7,281.1 440.3,284.4 437.5,286.3 438.0,287.2 441.8,288.7 444.6,291.0 448.4,291.3 448.4,287.7 450.3,284.4 453.1,283.4 457.8,283.4 464.5,284.4 471.1,284.4 474.4,286.8 476.8,289.1 480.0,289.6 483.9,297.1 484.8,304.7 482.9,310.4 478.2,316.1 473.4,320.8 469.6,318.9 472.5,322.7 468.7,326.5 463.0,328.4 458.2,331.2 463.9,330.3 461.1,336.0 455.4,337.9 450.6,339.2 455.4,340.7 464.9,341.7 473.4,341.1 478.2,342.6 478.2,347.4 475.3,353.1 468.7,356.9 462.0,359.7 454.4,363.5 446.9,367.3 440.2,365.4 430.7,365.4 423.1,366.3 416.5,367.3 410.8,365.4 404.2,367.3 398.5,368.2 392.8,369.2 385.2,370.1 381.4,372.0 384.9,373.2 377.3,373.2 373.5,374.5 365.9,369.9 358.4,370.7 349.5,374.5 344.4,380.8 341.9,388.4 334.3,384.6 328.0,383.4 319.1,385.9 311.5,388.4 303.9,393.5 300.1,396.8 297.6,393.5 290.0,392.2 287.8,395.1 284.1,392.5 286.6,388.7 294.2,387.5 303.0,383.7 305.6,377.3 311.9,373.5 315.7,364.7 320.0,358.4 319.1,359.3 325.4,356.8 328.0,351.7 340.6,350.5 354.6,351.7 360.9,347.9 367.2,342.1 373.5,335.3 371.5,334.5 365.9,339.1 357.1,344.1 348.2,345.4 340.6,340.3 331.8,335.3 325.4,337.8 325.4,336.5 320.4,332.7 310.3,335.2 305.2,333.9 300.6,331.4 301.4,323.8 307.7,321.3 315.3,317.5 326.7,314.9 331.8,311.1 330.5,303.5 331.8,294.7 330.5,287.1 321.6,290.9 314.6,292.2 315.3,288.4 324.2,284.6 328.0,280.8 338.1,274.4 347.0,273.2 354.6,270.6 357.1,274.4 363.4,274.4 365.9,271.9 362.2,273.2 358.4,265.6 362.2,260.5 358.4,256.7 359.6,250.4 364.7,245.3 363.4,240.3 358.4,242.8 353.3,240.3 349.5,232.7 344.4,227.6 345.1,226.3 351.4,217.5 359.0,212.4 348.9,211.1 343.8,217.5 332.4,218.7 327.3,214.9 322.3,218.7 313.4,217.5 312.2,221.3 307.1,214.9 308.4,208.6 315.9,198.5 320.2,191.9 319.0,188.1 314.5,184.3 313.9,178.0 314.5,170.4 312.6,176.7 308.8,180.5 305.0,178.0 303.8,181.8 300.0,184.3 298.7,190.6 296.2,195.7 298.1,188.1 300.0,181.8 301.2,172.9 305.0,169.1 310.1,165.3 313.9,162.8 306.3,167.2 300.0,171.6 298.7,165.3 300.0,157.7 303.8,153.9 310.1,151.4 305.7,154.6 303.8,152.7 307.6,146.3 310.7,142.5 306.3,146.3 302.5,152.0 298.7,153.9 294.9,152.7 289.8,149.5 287.3,147.6 284.8,145.1 291.1,143.8 296.2,141.3 293.0,139.2 293.6,136.7 295.5,132.9 297.4,129.1 300.0,125.3 298.1,122.8 294.9,120.3 294.3,115.2 296.2,111.4 296.8,103.8 298.7,100.0 300.8,101.9 312.2,103.2 307.1,100.6 304.6,95.6 308.4,94.3 306.3,89.2 310.9,88.0 312.2,81.6" fill="none" stroke="#9a9aa4" stroke-width="1" />
<polygon points="254.2,193.2 262.5,197.7 261.3,204.1 256.2,205.3 263.8,202.8 271.4,200.3 284.1,199.0 286.6,205.3 291.6,212.9 294.2,220.5 298.7,225.6 298.0,233.2 291.6,237.0 286.6,242.0 279.0,244.6 275.2,248.4 279.0,253.4 281.5,261.0 279.0,268.6 281.5,276.2 282.8,283.8 280.3,291.4 279.0,290.0 277.7,300.1 268.9,307.7 272.7,312.8 265.1,312.8 256.2,310.3 254.9,314.1 241.0,315.3 230.9,321.6 222.0,324.2 219.5,321.6 217.0,325.4 209.4,330.5 194.2,333.0 189.1,335.1 177.7,335.1 185.3,330.5 171.4,328.0 184.1,320.4 170.1,322.9 165.1,320.4 167.6,314.1 181.5,310.3 163.8,309.0 166.3,303.9 180.3,303.9 185.3,295.6 194.2,294.4 204.3,292.7 206.8,290.1 192.9,292.7 180.3,292.7 189.1,288.9 194.2,281.3 199.2,273.7 206.8,273.7 206.8,269.9 191.6,269.1 191.6,263.5 185.3,264.8 179.0,262.3 177.7,255.9 185.3,253.4 194.2,247.1 185.3,243.3 177.7,240.8 185.3,239.5 181.5,235.7 184.1,229.4 191.6,228.1 201.8,229.4 206.8,233.2 214.4,231.9 222.0,233.2 219.5,229.4 227.1,225.6 232.2,220.5 222.0,220.5 216.2,217.5 220.8,214.2 229.6,211.6 225.8,210.4 228.4,204.1 235.9,199.0 246.1,198.2" fill="none" stroke="#9a9aa4" stroke-width="1" />
<polygon points="308.2,456.3 309.0,451.7 315.3,449.2 325.4,447.9 335.6,444.1 341.9,445.4 344.4,441.6 353.3,440.3 362.2,442.9 368.5,451.7 370.0,449.4 373.8,448.5 381.4,446.6 387.1,451.3 389.0,448.5 392.8,445.6 398.5,446.6 405.1,447.0 401.3,444.7 400.4,437.1 399.4,429.5 396.6,421.9 393.7,414.3 389.0,407.7 393.7,409.6 401.3,409.6 407.0,407.7 409.8,411.5 413.6,417.2 421.2,420.0 430.7,421.0 437.4,421.5 443.1,420.0 446.9,417.2 453.5,415.3 457.3,414.0 453.5,414.7 448.7,412.4 445.9,409.6 447.8,404.8 453.5,402.0 461.1,399.2 470.6,396.3 479.1,390.6 483.9,384.0 484.8,374.5 483.5,365.0 485.5,368.2 484.6,361.6 487.4,356.9 495.0,354.0 504.5,351.2 512.1,348.3 519.7,343.6 527.3,338.8 533.0,335.0 538.7,325.5 537.7,323.6 542.5,318.9 546.3,313.2 551.0,306.6 554.8,300.9 557.3,289.5 557.6,280.0 558.6,283.2 561.4,278.5 567.1,274.7 570.9,270.9 574.7,268.1 576.6,263.3 581.4,259.5 589.0,256.7 597.5,255.3 607.0,253.4 613.6,251.9 614.6,249.1 617.4,244.7 622.2,242.4 628.8,240.5 635.4,238.6 636,239 636,458 308,458" fill="none" stroke="#9a9aa4" stroke-width="1" />
<polygon points="286.8,78.5 288.9,80.5 288.1,85.2 285.7,89.2 287.3,90.8 283.4,96.3 278.6,100.2 273.9,102.6 269.2,107.3 266.8,105.7 265.2,102.6 267.6,97.9 266.0,92.3 268.4,88.4 273.9,86.0 281.0,82.1" fill="none" stroke="#9a9aa4" stroke-width="1" />
<polygon points="351.4,58.1 356.5,56.1 361.5,58.1 365.8,63.2 364.1,68.2 361.0,70.8 359.0,67.0 355.2,69.5 350.9,65.7" fill="none" stroke="#9a9aa4" stroke-width="1" />
<polygon points="387.6,13.9 391.4,6.3 395.2,-1.3 402.8,-1.3 400.3,6.3 399.0,12.7 397.7,20.3 397.2,29.1 394.7,27.8 395.2,20.3 392.7,16.5" fill="none" stroke="#9a9aa4" stroke-width="1" />
<polygon points="399.0,368.4 405.3,365.8 411.6,365.8 411.6,369.6 406.6,373.4 401.5,372.2" fill="none" stroke="#9a9aa4" stroke-width="1" />
<polygon points="572.4,297.2 578.7,291.5 583.2,287.7 588.2,286.5 590.1,289.0 588.9,293.4 585.7,297.8 580.6,299.7 573.7,298.5" fill="none" stroke="#9a9aa4" stroke-width="1" />
<polygon points="567.7,259.5 576.5,256.2 577.3,257.7 568.9,261.5" fill="none" stroke="#9a9aa4" stroke-width="1" />
<polygon points="557.5,273.4 561.3,268.4 563.1,270.9 560.1,275.9" fill="none" stroke="#9a9aa4" stroke-width="1" />
<polyline points="637.3,110.9 627.9,112.8 623.1,120.4 620.3,130.9 621.2,141.3 623.1,151.7 626.0,159.3 627.9,166.0 626.9,170.7 630.7,172.6 637.3,171.7" fill="none" stroke="#9a9aa4" stroke-width="1"/>
<polyline points="623.1,129.0 627.9,130.5 632.6,129.0 635.4,125.2 632.6,121.8 627.9,121.0" fill="none" stroke="#9a9aa4" stroke-width="1"/>
<polyline points="627.9,127.1 630.1,125.6 632.0,127.5 630.1,129.7" fill="none" stroke="#9a9aa4" stroke-width="1"/>
<polyline points="623.3,150.8 627.9,152.7 630.7,157.4 635.4,159.7" fill="none" stroke="#9a9aa4" stroke-width="1"/>
<polyline points="571.8,270.0 568.6,275.1 568.0,281.4 570.5,283.9 573.7,285.2 570.5,289.0 569.2,292.8 570.5,297.2 573.7,298.5" fill="none" stroke="#9a9aa4" stroke-width="1"/>
<polyline points="573.7,285.2 580.0,287.7 581.9,283.9 583.2,278.9 576.2,277.0 574.3,272.5 574.9,270.0" fill="none" stroke="#9a9aa4" stroke-width="1"/>
<polyline points="574.7,268.1 577.6,270.9 577.0,275.6" fill="none" stroke="#9a9aa4" stroke-width="1"/>
<polyline points="570.9,270.9 570.9,278.5" fill="none" stroke="#9a9aa4" stroke-width="1"/>
<polyline points="537.7,323.6 544.4,322.7 550.1,326.5 542.5,326.5 538.7,327.4" fill="none" stroke="#9a9aa4" stroke-width="1"/>
<polyline points="533.9,333.1 542.5,331.2 552.0,330.3 554.8,333.1 546.3,334.1 540.6,336.0" fill="none" stroke="#9a9aa4" stroke-width="1"/>
<polyline points="533.0,339.8 542.5,336.9 552.0,336.0 555.7,338.8" fill="none" stroke="#9a9aa4" stroke-width="1"/>
<polyline points="622.1,254.4 619.6,260.8 620.8,265.8 615.8,273.4 612.0,281.0 613.2,288.6 620.8,289.9 619.6,297.5 615.8,303.8 608.2,311.4 600.6,316.5 598.1,324.1" fill="none" stroke="#9a9aa4" stroke-width="1"/>
<polyline points="614.5,249.4 615.8,254.4 622.1,255.7 623.4,249.4" fill="none" stroke="#9a9aa4" stroke-width="1"/>
<polyline points="528.4,337.8 539.8,335.3 549.9,336.6 560.1,334.1 571.5,331.5 575.3,327.7 577.8,334.1 585.4,337.8 595.5,340.4 598.1,348.0 594.3,354.3 603.1,353.0 610.7,360.6 617.0,368.2" fill="none" stroke="#9a9aa4" stroke-width="1"/>
<polyline points="608.2,310.0 600.6,313.8 595.5,317.6 599.3,325.2 605.6,329.0 604.4,337.8 598.1,348.0" fill="none" stroke="#9a9aa4" stroke-width="1"/>
<polyline points="509.4,348.0 512.0,358.1 518.3,363.2 527.2,364.4 533.5,370.8 542.4,374.6 555.0,375.8 557.5,388.5 565.1,387.2 574.0,380.9 576.5,391.0 585.4,394.8 595.5,401.1 605.6,398.6 620.8,399.9 636.0,411.3" fill="none" stroke="#9a9aa4" stroke-width="1"/>
<polyline points="605.6,398.6 601.8,391.0 605.6,378.4 612.0,374.6 617.0,368.2 623.4,373.3 620.8,383.4 623.4,393.5 620.8,399.9" fill="none" stroke="#9a9aa4" stroke-width="1"/>
</g>
<text class="n" x="406.1" y="134.1" text-anchor="middle">0</text>
<text class="n" x="395.0" y="152.3" text-anchor="middle">0</text>
<text class="n" x="407.0" y="152.0" text-anchor="middle">0</text>
<text class="n" x="396.0" y="187.8" text-anchor="middle">0</text>
<text class="n" x="419.9" y="187.8" text-anchor="middle">0</text>
<text class="n" x="384.2" y="196.7" text-anchor="middle">1</text>
<text class="n" x="396.0" y="196.7" text-anchor="middle">0</text>
<text class="n" x="408.0" y="196.7" text-anchor="middle">0</text>
<text class="n" x="469.1" y="202.4" text-anchor="middle">0</text>
<text class="n" x="544.5" y="215.2" text-anchor="middle">0</text>
<text class="n" x="557.8" y="222.2" text-anchor="middle">1</text>
<text class="n" x="559.3" y="231.7" text-anchor="middle">0</text>
<text class="n" x="571.1" y="230.8" text-anchor="middle">1</text>
<text class="n" x="584.0" y="228.9" text-anchor="middle">1</text>
<text class="n" x="535.4" y="242.7" text-anchor="middle">0</text>
<text class="n" x="560.5" y="240.8" text-anchor="middle">0</text>
<text class="n" x="524.0" y="252.6" text-anchor="middle">3</text>
<text class="n" x="536.4" y="252.0" text-anchor="middle">0</text>
<text class="n" x="561.2" y="249.7" text-anchor="middle">1</text>
<text class="n" x="573.9" y="248.2" text-anchor="middle">0</text>
<text class="n" x="486.8" y="264.5" text-anchor="middle">7</text>
<text class="n" x="511.9" y="262.6" text-anchor="middle">0</text>
<text class="n" x="524.6" y="261.9" text-anchor="middle">3</text>
<text class="n" x="563.9" y="267.4" text-anchor="middle">0</text>
<text class="n" x="589.5" y="264.5" text-anchor="middle">0</text>
<text class="n" x="486.8" y="274.0" text-anchor="middle">1</text>
<text class="n" x="500.3" y="272.9" text-anchor="middle">0</text>
<text class="n" x="513.2" y="271.9" text-anchor="middle">1</text>
<text class="n" x="538.4" y="269.7" text-anchor="middle">0</text>
<text class="n" x="565.4" y="275.9" text-anchor="middle">3</text>
<text class="n" x="590.6" y="273.6" text-anchor="middle">0</text>
<text class="n" x="487.6" y="282.9" text-anchor="middle">3</text>
<text class="n" x="513.8" y="280.5" text-anchor="middle">0</text>
<text class="n" x="591.6" y="282.4" text-anchor="middle">2</text>
<text class="n" x="493.7" y="202.3" text-anchor="middle">0</text>
<text class="n" x="383.9" y="215.3" text-anchor="middle">0</text>
<text class="n" x="396.6" y="223.9" text-anchor="middle">1</text>
<text class="n" x="409.8" y="249.9" text-anchor="middle">0</text>
<text class="n" x="410.8" y="276.6" text-anchor="middle">0</text>
<text class="n" x="436.0" y="275.7" text-anchor="middle">1</text>
<text class="n" x="436.8" y="284.6" text-anchor="middle">1</text>
<text class="n" x="457.7" y="212.5" text-anchor="middle">0</text>
<text class="n" x="470.0" y="211.5" text-anchor="middle">0</text>
<text class="n" x="458.6" y="221.6" text-anchor="middle">0</text>
<text class="n" x="461.1" y="257.3" text-anchor="middle">0</text>
<text class="n" x="474.9" y="274.5" text-anchor="middle">1</text>
<text class="n" x="475.3" y="283.3" text-anchor="middle">0</text>
<text class="n" x="450.1" y="293.7" text-anchor="middle">0</text>
<text class="n" x="476.3" y="291.4" text-anchor="middle">0</text>
<text class="n" x="444.0" y="428.4" text-anchor="middle">1</text>
<text class="n" x="430.3" y="437.9" text-anchor="middle">0</text>
<text class="n" x="444.4" y="436.9" text-anchor="middle">0</text>
<text class="n" x="431.1" y="446.6" text-anchor="middle">1</text>
<text class="n" x="526.9" y="172.1" text-anchor="middle">0</text>
<text class="n" x="542.2" y="197.7" text-anchor="middle">0</text>
<text class="n" x="613.4" y="180.6" text-anchor="middle">0</text>
<text class="n" x="605.1" y="280.8" text-anchor="middle">0</text>
<text class="n" x="606.0" y="208.7" text-anchor="middle">0</text>
<text class="n" x="619.3" y="215.7" text-anchor="middle">0</text>
<text class="n" x="608.9" y="226.1" text-anchor="middle">0</text>
<text class="n" x="542.1" y="296.5" text-anchor="middle">0</text>
<text class="n" x="554.4" y="295.2" text-anchor="middle">0</text>
<text class="n" x="555.7" y="303.6" text-anchor="middle">3</text>
<text class="n" x="558.0" y="321.8" text-anchor="middle">0</text>
<text class="n" x="570.9" y="320.8" text-anchor="middle">1</text>
<text class="n" x="572.4" y="329.4" text-anchor="middle">0</text>
<text class="n" x="585.5" y="327.8" text-anchor="middle">0</text>
<text class="n" x="519.1" y="333.2" text-anchor="middle">7</text>
<text class="n" x="532.4" y="333.0" text-anchor="middle">0</text>
<text class="n" x="520.1" y="343.0" text-anchor="middle">0</text>
<text class="n" x="533.5" y="342.1" text-anchor="middle">0</text>
<text class="n" x="521.0" y="352.1" text-anchor="middle">1</text>
<text class="n" x="522.0" y="360.5" text-anchor="middle">3</text>
<text class="n" x="522.9" y="370.0" text-anchor="middle">0</text>
<text class="n" x="536.4" y="368.6" text-anchor="middle">0</text>
<text class="n" x="614.6" y="342.6" text-anchor="middle">0</text>
<text class="n" x="615.9" y="352.1" text-anchor="middle">1</text>
<text class="n" x="617.0" y="360.5" text-anchor="middle">1</text>
<text class="n" x="618.7" y="369.6" text-anchor="middle">0</text>
<text class="n" x="632.6" y="367.7" text-anchor="middle">0</text>
<text class="n" x="537.3" y="377.7" text-anchor="middle">0</text>
<text class="n" x="581.7" y="401.1" text-anchor="middle">0</text>
<text class="n" x="582.7" y="409.4" text-anchor="middle">1</text>
<text class="n" x="583.8" y="418.5" text-anchor="middle">1</text>
<text class="n" x="571.5" y="428.4" text-anchor="middle">0</text>
<text class="n" x="585.2" y="428.0" text-anchor="middle">0</text>
<text class="n" x="599.4" y="425.7" text-anchor="middle">0</text>
<text class="n" x="586.1" y="436.2" text-anchor="middle">1</text>
<text class="n" x="600.7" y="434.7" text-anchor="middle">0</text>
<text class="n" x="588.0" y="445.1" text-anchor="middle">0</text>
<text class="n" x="609.4" y="397.7" text-anchor="middle">0</text>
<text class="n" x="610.8" y="406.8" text-anchor="middle">0</text>
<text class="n" x="611.7" y="415.7" text-anchor="middle">0</text>
<text class="n" x="627.3" y="422.7" text-anchor="middle">0</text>
<text class="n" x="618.0" y="458.8" text-anchor="middle">1</text>
<text class="n" x="633.0" y="458.4" text-anchor="middle">0</text>
<text class="n" x="504.5" y="317.0" text-anchor="middle">0</text>
<text class="n" x="506.0" y="334.5" text-anchor="middle">1</text>
<text class="n" x="506.8" y="343.4" text-anchor="middle">0</text>
<text class="n" x="506.8" y="352.9" text-anchor="middle">1</text>
<text class="n" x="495.4" y="362.9" text-anchor="middle">1</text>
<text class="n" x="507.9" y="361.6" text-anchor="middle">1</text>
</svg>
<svg width="634" height="33" viewBox="0 457 634 33" style="position:absolute;left:0;top:457px;display:block">
<rect x="5.30" y="473.5" width="23.10" height="7" fill="#d8f8f8" stroke="#000" stroke-width="1"/>
<rect x="28.40" y="473.5" width="23.10" height="7" fill="#aaf4f8" stroke="#000" stroke-width="1"/>
<rect x="51.50" y="473.5" width="23.10" height="7" fill="#88ecf0" stroke="#000" stroke-width="1"/>
<rect x="74.60" y="473.5" width="23.10" height="7" fill="#66d8f0" stroke="#000" stroke-width="1"/>
<rect x="97.70" y="473.5" width="23.10" height="7" fill="#55aaee" stroke="#000" stroke-width="1"/>
<rect x="120.80" y="473.5" width="23.10" height="7" fill="#4488ee" stroke="#000" stroke-width="1"/>
<rect x="143.90" y="473.5" width="23.10" height="7" fill="#3355ee" stroke="#000" stroke-width="1"/>
<rect x="167.00" y="473.5" width="23.10" height="7" fill="#2233cc" stroke="#000" stroke-width="1"/>
<rect x="190.10" y="473.5" width="23.10" height="7" fill="#0a0aaa" stroke="#000" stroke-width="1"/>
<rect x="213.20" y="473.5" width="23.10" height="7" fill="#9911ee" stroke="#000" stroke-width="1"/>
<rect x="236.30" y="473.5" width="23.10" height="7" fill="#cc11ee" stroke="#000" stroke-width="1"/>
<rect x="259.40" y="473.5" width="23.10" height="7" fill="#ff11ee" stroke="#000" stroke-width="1"/>
<rect x="282.50" y="473.5" width="23.10" height="7" fill="#cc11bb" stroke="#000" stroke-width="1"/>
<polygon points="306.1,473.6 310.6,473.8 329.1,478 329.1,478.8 314.6,481 306.1,481" fill="#880e99"/>
</svg>
<svg width="634" height="33" viewBox="0 457 634 33" style="position:absolute;left:0;top:457px;display:block;will-change:transform"><text class="tx" font-size="12" y="469.8"><tspan x="0.80" textLength="82.70" lengthAdjust="spacing">Precipitation</tspan> <tspan x="92.00" textLength="36.50" lengthAdjust="spacingAndGlyphs">[mm]</tspan> <tspan x="138.40" textLength="28.10" lengthAdjust="spacingAndGlyphs">ICON</tspan><tspan x="168.56" dy="-1" textLength="10.48" lengthAdjust="spacingAndGlyphs">-</tspan><tspan dy="1" x="178.80" textLength="17.90" lengthAdjust="spacingAndGlyphs" letter-spacing="0.322">D2</tspan></text>
<text class="tx" font-size="12" y="469.8"><tspan x="362.80" textLength="14.90" lengthAdjust="spacing">Th</tspan> <tspan x="386.40" textLength="16.00" lengthAdjust="spacingAndGlyphs" letter-spacing="0.599">20</tspan><tspan x="403.44" dy="-1" textLength="11.31" lengthAdjust="spacingAndGlyphs">-</tspan><tspan dy="1" x="416.6" textLength="15.60" lengthAdjust="spacingAndGlyphs" letter-spacing="1.2">11</tspan><tspan x="429.94" dy="-1" textLength="11.31" lengthAdjust="spacingAndGlyphs">-</tspan><tspan dy="1" x="442.30" textLength="35.20" lengthAdjust="spacingAndGlyphs" letter-spacing="1.327">2025</tspan> <tspan x="485.60" textLength="40.60" lengthAdjust="spacingAndGlyphs" letter-spacing="0.481">20..21</tspan> <tspan x="537.30" textLength="23.80" lengthAdjust="spacing">UTC</tspan> <tspan x="569.90" textLength="58.00" lengthAdjust="spacingAndGlyphs" letter-spacing="0.948">(09+12)</tspan></text>
<text class="tx" font-size="10" y="490.3"><tspan x="3.30" textLength="15.71" lengthAdjust="spacingAndGlyphs">0.1</tspan> <tspan x="26.40" textLength="15.71" lengthAdjust="spacingAndGlyphs">0.5</tspan> <tspan x="49.50" textLength="6.28" lengthAdjust="spacingAndGlyphs">1</tspan> <tspan x="72.60" textLength="6.28" lengthAdjust="spacingAndGlyphs">2</tspan> <tspan x="95.70" textLength="6.28" lengthAdjust="spacingAndGlyphs">5</tspan> <tspan x="118.80" textLength="12.57" lengthAdjust="spacingAndGlyphs">10</tspan> <tspan x="141.90" textLength="12.57" lengthAdjust="spacingAndGlyphs">15</tspan> <tspan x="165.00" textLength="12.57" lengthAdjust="spacingAndGlyphs">20</tspan> <tspan x="188.10" textLength="12.57" lengthAdjust="spacingAndGlyphs">25</tspan> <tspan x="211.20" textLength="12.57" lengthAdjust="spacingAndGlyphs">30</tspan> <tspan x="234.30" textLength="12.57" lengthAdjust="spacingAndGlyphs">35</tspan> <tspan x="257.40" textLength="12.57" lengthAdjust="spacingAndGlyphs">40</tspan> <tspan x="280.50" textLength="12.57" lengthAdjust="spacingAndGlyphs">45</tspan> <tspan x="303.60" textLength="12.57" lengthAdjust="spacingAndGlyphs">50</tspan></text></svg>
</body></html>
